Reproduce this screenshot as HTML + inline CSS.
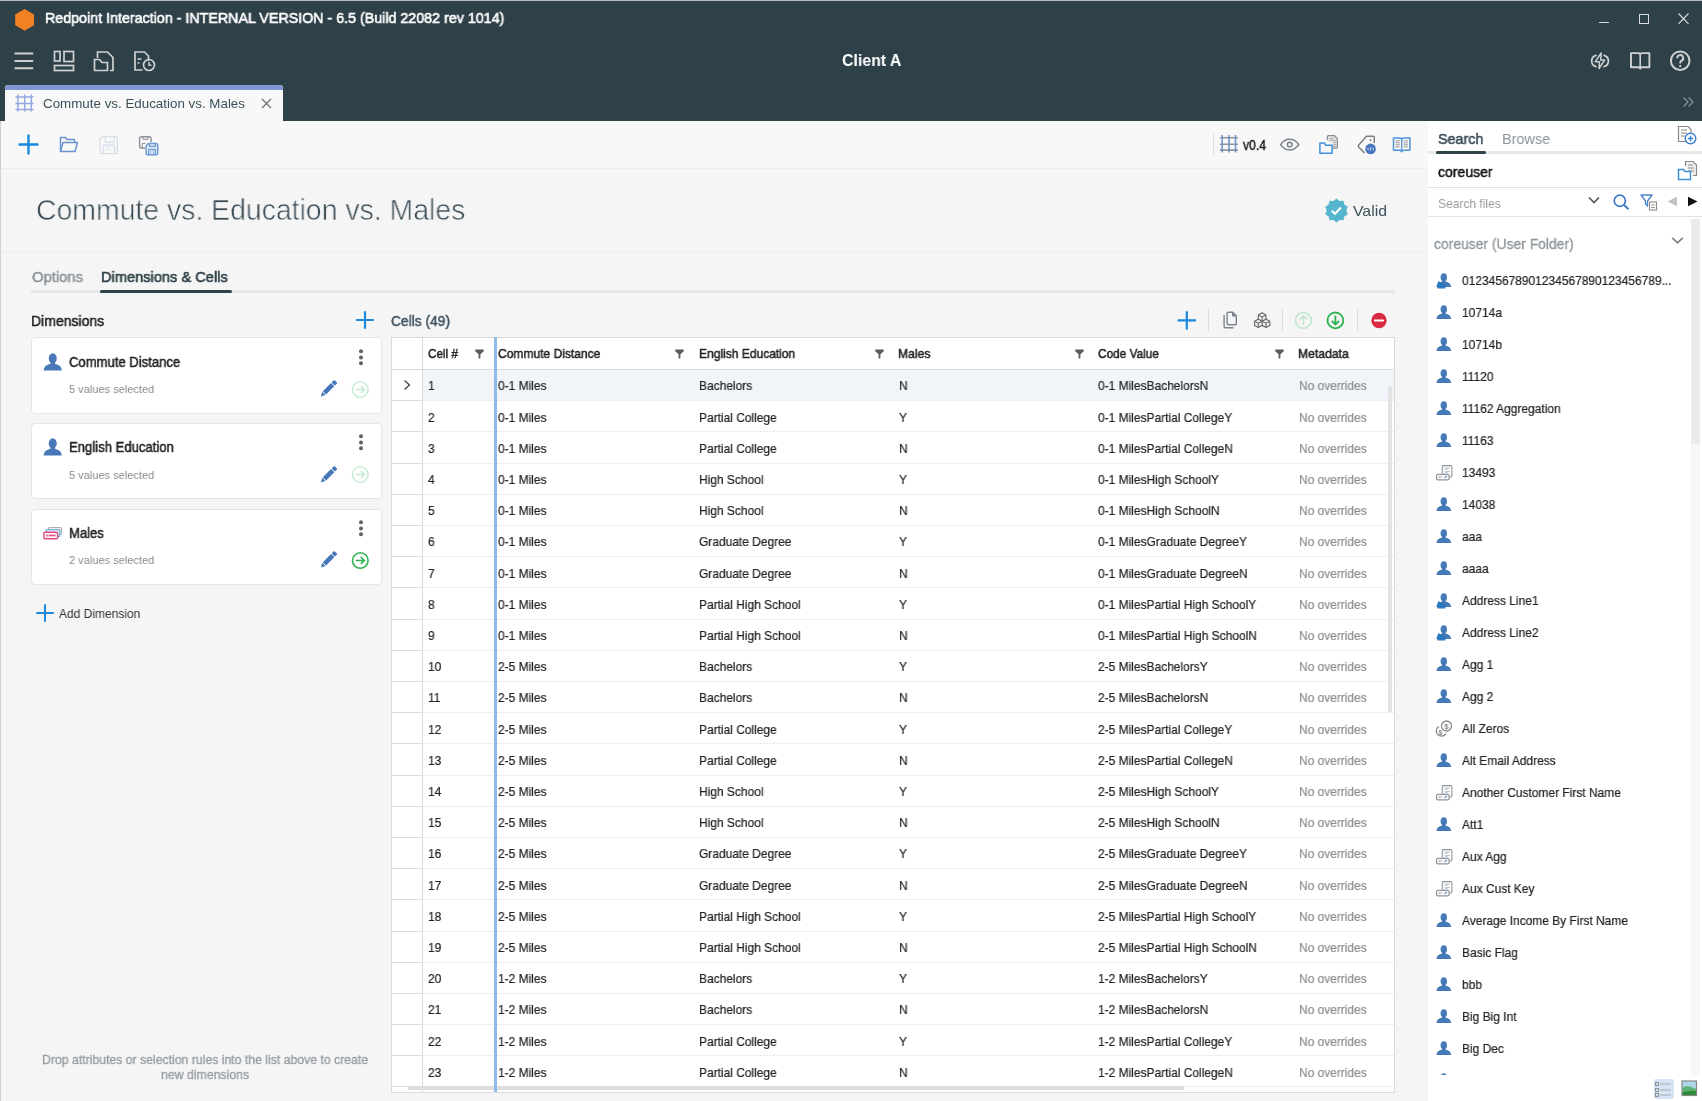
<!DOCTYPE html>
<html><head><meta charset="utf-8"><title>Redpoint Interaction</title>
<style>
html,body{margin:0;padding:0;width:1702px;height:1101px;overflow:hidden;background:#f4f4f4;font-family:"Liberation Sans", sans-serif}
.t{position:absolute;white-space:nowrap;will-change:transform}
.b{position:absolute}
.s{position:absolute;overflow:visible}
</style></head><body>
<div class="b" style="left:0px;top:0px;width:1702px;height:121px;background:#2e4048"></div>
<div class="b" style="left:0px;top:0px;width:1702px;height:1px;background:#b9bdbf"></div>
<svg class="s" style="left:13px;top:8px" width="22" height="24" viewBox="0 0 22 24"><polygon points="11.6,1 21,6.5 21,17.3 11.6,22.8 2.2,17.3 2.2,6.5" fill="#f28123"/></svg>
<div id="x1" class="t apptitle" style="left:44.6px;top:10.30px;font-size:15px;line-height:15px;color:#fff;font-weight:400;transform:scaleX(0.9509);transform-origin:0 0;-webkit-text-stroke:0.6px #fff;">Redpoint Interaction - INTERNAL VERSION - 6.5 (Build 22082 rev 1014)</div>
<div class="b" style="left:1599px;top:22px;width:10px;height:1px;background:#d9dcdd"></div>
<div class="b" style="left:1639px;top:13.5px;width:10px;height:10px;border:1px solid #d9dcdd;box-sizing:border-box"></div>
<svg class="s" style="left:1677px;top:13px" width="13" height="12" viewBox="0 0 13 12"><path d="M1.5 0.5L11.5 10.8M11.5 0.5L1.5 10.8" stroke="#d9dcdd" stroke-width="1.1"/></svg>
<svg class="s" style="left:14px;top:52px" width="20" height="18" viewBox="0 0 20 18"><path d="M0.5 1.5H19.2M0.5 9H19.2M0.5 16.3H19.2" stroke="#cfd2d3" stroke-width="2"/></svg>
<svg class="s" style="left:53px;top:50px" width="22" height="22" viewBox="0 0 22 22"><rect x="1.5" y="1.5" width="5.5" height="9.5" fill="none" stroke="#cfd2d3" stroke-width="1.7"/><rect x="11" y="1.5" width="9.5" height="10" fill="none" stroke="#cfd2d3" stroke-width="1.7"/><rect x="1.5" y="15.5" width="19" height="5" fill="none" stroke="#cfd2d3" stroke-width="1.7"/></svg>
<svg class="s" style="left:93px;top:50px" width="22" height="22" viewBox="0 0 22 22"><path d="M4.5 8V2H14.5L20 7.5V20.5H17" fill="none" stroke="#cfd2d3" stroke-width="1.7"/><path d="M1.5 9.5H6.5L9 12.5H14.5V20.5H1.5Z" fill="none" stroke="#cfd2d3" stroke-width="1.7"/></svg>
<svg class="s" style="left:133px;top:50px" width="24" height="22" viewBox="0 0 24 22"><path d="M9.5 20H2V2H11.5L15.5 6V11" fill="none" stroke="#cfd2d3" stroke-width="1.7"/><path d="M4.5 9H8.5M4.5 13H6.5" stroke="#cfd2d3" stroke-width="1.5"/><circle cx="16" cy="15" r="5.5" fill="none" stroke="#cfd2d3" stroke-width="1.7"/><path d="M16 12V15.3H18.5" fill="none" stroke="#cfd2d3" stroke-width="1.4"/></svg>
<div id="x2" class="t client" style="left:842px;top:52.01px;font-size:17px;line-height:17px;color:#fff;font-weight:700;transform:scaleX(0.9341);transform-origin:0 0;">Client A</div>
<svg class="s" style="left:1588px;top:50px" width="24" height="22" viewBox="1588 50 24 22"><g fill="none" stroke="#cfd2d3"><path d="M1596 55.4A5.8 5.8 0 0 0 1596 66.6M1604.1 55.4A5.8 5.8 0 0 1 1604.1 66.6" stroke-width="1.8" stroke-linecap="round"/><path d="M1601.2 53L1595.3 61.7H1599.5L1599 68.5L1604.7 59.9H1600.7Z" stroke-width="1.5" stroke-linejoin="round"/></g></svg>
<svg class="s" style="left:1628px;top:50px" width="24" height="22" viewBox="1628 50 24 22"><path d="M1631 53.1H1639L1640.2 54.2L1641.4 53.1H1649.4V67.2H1641.4L1640.2 68.5L1639 67.2H1631Z" fill="none" stroke="#cfd2d3" stroke-width="1.9" stroke-linejoin="round"/><path d="M1640.2 54.2V67.2" stroke="#cfd2d3" stroke-width="1.6"/></svg>
<svg class="s" style="left:1668px;top:49px" width="24" height="24" viewBox="1668 49 24 24"><circle cx="1680.2" cy="60.7" r="9.3" fill="none" stroke="#cfd2d3" stroke-width="2"/><path d="M1677.2 58.2A3 3 0 1 1 1681.2 60.9C1680.3 61.5 1680.2 62.3 1680.2 63.4" fill="none" stroke="#cfd2d3" stroke-width="1.9"/><circle cx="1680.2" cy="66.1" r="1.2" fill="#cfd2d3"/></svg>
<div class="b" style="left:5px;top:85px;width:278px;height:36px;background:#f8f8f8;border-radius:3px 3px 0 0;overflow:hidden"></div>
<div class="b" style="left:5px;top:85px;width:278px;height:5px;background:#7d97d5;border-radius:3px 3px 0 0"></div>
<svg class="s" style="left:14px;top:93px" width="21" height="20" viewBox="14 93 21 20"><path d="M17.9 94.5V111.5M24.7 94.5V111.5M31.3 94.5V111.5M15.5 97H33.5M15.5 103.4H33.5M15.5 109.5H33.5" stroke="#93a7e0" stroke-width="1.45"/></svg>
<div id="x3" class="t tabtitle" style="left:43px;top:96.80px;font-size:13px;line-height:13px;color:#3d5059;font-weight:400;transform:scaleX(1.0278);transform-origin:0 0;">Commute vs. Education vs. Males</div>
<svg class="s" style="left:261px;top:98px" width="11" height="11" viewBox="0 0 11 11"><path d="M1 1L10 10M10 1L1 10" stroke="#6e6e6e" stroke-width="1.2"/></svg>
<svg class="s" style="left:1682px;top:96px" width="13" height="12" viewBox="0 0 13 12"><path d="M1.5 1.5L6 6L1.5 10.5M6.5 1.5L11 6L6.5 10.5" fill="none" stroke="#8a9599" stroke-width="1.2"/></svg>
<div class="b" style="left:0px;top:121px;width:1428px;height:980px;background:#f5f5f5"></div>
<div class="b" style="left:0px;top:121px;width:1px;height:980px;background:#cfcfcf"></div>
<div class="b" style="left:1px;top:121px;width:1427px;height:47px;background:#f8f8f8"></div>
<div class="b" style="left:1px;top:168px;width:1423px;height:1px;background:#ededed"></div>
<svg class="s" style="left:18px;top:134px" width="21" height="21" viewBox="0 0 21 21"><path d="M10.5 1.5V19.5M1.5 10.5H19.5" stroke="#1a88dc" stroke-width="2.4" stroke-linecap="round"/></svg>
<svg class="s" style="left:59px;top:135px" width="21" height="19" viewBox="0 0 21 19"><path d="M1.5 16.5V2.5H6.5L8 4.5H15.5V7" fill="none" stroke="#6a94cf" stroke-width="1.5" stroke-linejoin="round"/><path d="M1.5 16.5L4 7.5H18.5L16 16.5Z" fill="none" stroke="#6a94cf" stroke-width="1.5" stroke-linejoin="round"/></svg>
<svg class="s" style="left:98px;top:135px" width="21" height="21" viewBox="98 135 21 21"><g fill="none" stroke-linejoin="round"><path d="M102.7 136.6H116.3Q117.3 136.6 117.3 137.6V152.7Q117.3 153.7 116.3 153.7H101Q100 153.7 100 152.7V139.3Z" stroke="#dadde1" stroke-width="1.3"/><path d="M105.3 136.6V141.3Q105.3 142.3 106.3 142.3H113.2Q114.2 142.3 114.2 141.3V136.6M103.2 153.7V146.2Q103.2 145.2 104.2 145.2H113.5Q114.5 145.2 114.5 146.2V153.7" stroke="#d3dceb" stroke-width="1.2"/><path d="M105.5 147.5H109M105.5 149.8H111.5" stroke="#dfe5ee" stroke-width="0.9"/></g></svg>
<svg class="s" style="left:137px;top:134px" width="23" height="23" viewBox="137 134 23 23"><g fill="none" stroke-linejoin="round"><path d="M151.1 142V138.5Q151.1 136.7 149.3 136.7H141.4Q139.6 136.7 139.6 138.5V146.2Q139.6 148 141.4 148H145" stroke="#8b9197" stroke-width="1.4"/><path d="M143 136.7V139.3H148V136.7M142.2 148V143.5H145.5" stroke="#8b9197" stroke-width="1"/><path d="M148.5 143.5H156.2Q157.7 143.5 157.7 145V153.2Q157.7 154.7 156.2 154.7H147.6Q146.1 154.7 146.1 153.2V146Z" fill="#e3ebf7" stroke="#6f9ad6" stroke-width="1.5"/><path d="M149.5 143.6V146.4H155.3V143.6M148.6 154.6V149.3H155.4V154.6" stroke="#6f9ad6" stroke-width="1.2"/><path d="M150.8 149.5V154.5M153.2 149.5V154.5" stroke="#8fb2e0" stroke-width="0.9"/></g></svg>
<div class="b" style="left:1213px;top:134px;width:1px;height:21px;background:#dedede"></div>
<svg class="s" style="left:1218px;top:134px" width="22" height="20" viewBox="1218 134 22 20"><path d="M1222.2 135.1V152.6M1229 135.1V152.6M1235.5 135.1V152.6" stroke="#6f9ad8" stroke-width="1.6"/><path d="M1219.8 137.8H1237.9M1219.8 144.2H1237.9M1219.8 150.1H1237.9" stroke="#7d868c" stroke-width="1.6" opacity="0.85"/></svg>
<div id="x4" class="t ver" style="left:1243px;top:138.15px;font-size:14px;line-height:14px;color:#222;font-weight:400;transform:scaleX(0.8689);transform-origin:0 0;-webkit-text-stroke:0.5px #222;">v0.4</div>
<svg class="s" style="left:1278px;top:137px" width="23" height="15" viewBox="1278 137 23 15"><g fill="none" stroke="#79828a" stroke-width="1.5"><path d="M1280.6 144.6C1283.5 140.3 1286.5 139.3 1289.7 139.3S1295.9 140.3 1298.8 144.6C1295.9 148.9 1292.9 149.9 1289.7 149.9S1283.5 148.9 1280.6 144.6Z"/><circle cx="1289.7" cy="144.6" r="2.3"/></g></svg>
<svg class="s" style="left:1318px;top:134px" width="21" height="21" viewBox="1318 134 21 21"><path d="M1327.4 140V136.7Q1327.4 135.7 1328.4 135.7H1334.5L1337.3 138.5V147.2Q1337.3 148.2 1336.3 148.2H1333" fill="#f0f0f0" stroke="#8a8a8a" stroke-width="1.3"/><path d="M1328.8 138.3H1334M1328.8 140.3H1336M1333 142.3H1336M1333 144.3H1336M1333 146.3H1336" stroke="#9a9a9a" stroke-width="0.9"/><path d="M1319.9 153.3V143H1324.3L1325.8 145.3H1332.1V153.3Z" fill="#f8f8f8" stroke="#3f8ed6" stroke-width="1.5" stroke-linejoin="round"/></svg>
<svg class="s" style="left:1356px;top:134px" width="21" height="21" viewBox="1356 134 21 21"><path d="M1374.3 143V137.3Q1374.3 136.2 1373.2 136.2H1366.5L1358.5 145.2Q1357.8 146 1358.5 146.8L1364.5 153" fill="none" stroke="#7a7a7a" stroke-width="1.4"/><circle cx="1370.5" cy="140.3" r="1" fill="#7a7a7a"/><circle cx="1370.6" cy="148.9" r="5.3" fill="#4676c0"/><path d="M1368.6 147.7L1367.5 148.9L1368.6 150.1M1372.6 147.7L1373.7 148.9L1372.6 150.1M1371 147.4L1370.2 150.4" fill="none" stroke="#fff" stroke-width="0.8"/></svg>
<svg class="s" style="left:1391px;top:136px" width="21" height="18" viewBox="1391 136 21 18"><path d="M1393.5 137.9H1400.3L1401.7 139.2L1403.1 137.9H1409.9V150.3H1403.1L1401.7 151.7L1400.3 150.3H1393.5Z" fill="none" stroke="#4a93d8" stroke-width="1.5" stroke-linejoin="round"/><path d="M1401.7 139.2V150.3" stroke="#4a93d8" stroke-width="1.3"/><path d="M1395.5 140.8H1399.8M1395.5 142.8H1399.8M1395.5 144.8H1399.8M1395.5 146.8H1399.8M1403.6 140.8H1407.9M1403.6 142.8H1407.9M1403.6 144.8H1407.9M1403.6 146.8H1407.9" stroke="#9a9a9a" stroke-width="1"/></svg>
<div id="x5" class="t title" style="left:36px;top:195.65px;font-size:29px;line-height:29px;color:#3b4c56;font-weight:400;transform:scaleX(0.9793);transform-origin:0 0;-webkit-text-stroke:0.6px #f5f5f5;">Commute vs. Education vs. Males</div>
<svg class="s" style="left:1324px;top:198px" width="25" height="25" viewBox="0 0 25 25"><path d="M12.5 0.5L15.5 3L19.5 2.8L20.3 6.6L23.8 8.7L22.3 12.5L23.8 16.3L20.3 18.4L19.5 22.2L15.5 22L12.5 24.5L9.5 22L5.5 22.2L4.7 18.4L1.2 16.3L2.7 12.5L1.2 8.7L4.7 6.6L5.5 2.8L9.5 3Z" fill="#55b5cd"/><path d="M7.7 12.8L11 15.8L17 9.5" fill="none" stroke="#fff" stroke-width="2.1"/></svg>
<div id="x6" class="t valid" style="left:1353.3px;top:202.60px;font-size:15px;line-height:15px;color:#3d4f5a;font-weight:400;transform:scaleX(1.0543);transform-origin:0 0;">Valid</div>
<div class="b" style="left:1px;top:251px;width:1423px;height:1px;background:#ececec"></div>
<div id="x7" class="t opt" style="left:32px;top:269.10px;font-size:15px;line-height:15px;color:#8b959b;font-weight:400;transform:scaleX(0.9864);transform-origin:0 0;-webkit-text-stroke:0.5px #8b959b;">Options</div>
<div id="x8" class="t dimc" style="left:101.3px;top:269.10px;font-size:15px;line-height:15px;color:#2f4149;font-weight:400;transform:scaleX(0.9743);transform-origin:0 0;-webkit-text-stroke:0.6px #2f4149;">Dimensions &amp; Cells</div>
<div class="b" style="left:31px;top:290px;width:1364px;height:3px;background:#e6e6e6"></div>
<div class="b" style="left:100px;top:290px;width:132px;height:3px;background:#2f4149;border-radius:2px"></div>
<div id="x9" class="t dimh" style="left:30.8px;top:313.40px;font-size:15px;line-height:15px;color:#222;font-weight:400;transform:scaleX(0.9340);transform-origin:0 0;-webkit-text-stroke:0.5px #222;">Dimensions</div>
<svg class="s" style="left:356px;top:311px" width="18" height="18" viewBox="0 0 18 18"><path d="M9 1V17M1 9H17" stroke="#1a88dc" stroke-width="2.2" stroke-linecap="round"/></svg>
<div class="b" style="left:31px;top:337px;width:351px;height:77px;background:#fff;border:1px solid #e4e6e8;border-radius:4px;box-sizing:border-box"></div>
<svg class="s" style="left:42.8px;top:352.5px" width="20" height="18.75" viewBox="0 0 16 15"><g fill="#4878b8"><ellipse cx="7.8" cy="4.3" rx="3.2" ry="4.1"/><path d="M6.1 7.6L5.8 8.8C3.2 9.4 0.9 10.3 0.5 14H15.1C14.7 10.3 12.4 9.4 9.8 8.8L9.5 7.6Z"/></g></svg>
<div id="x10" class="t cardt" style="left:68.7px;top:354.65px;font-size:14px;line-height:14px;color:#222;font-weight:400;transform:scaleX(0.9341);transform-origin:0 0;-webkit-text-stroke:0.5px #222;">Commute Distance</div>
<div id="x11" class="t cards" style="left:68.7px;top:384.21px;font-size:11.8px;line-height:11.8px;color:#8a8a8a;font-weight:400;transform:scaleX(0.9358);transform-origin:0 0;">5 values selected</div>
<svg class="s" style="left:357px;top:348.5px" width="8" height="18" viewBox="0 0 8 18"><circle cx="4" cy="2.2" r="2" fill="#606060"/><circle cx="4" cy="8.5" r="2" fill="#606060"/><circle cx="4" cy="14.3" r="2" fill="#606060"/></svg>
<svg class="s" style="left:318px;top:378px" width="22" height="22" viewBox="0 0 22 22"><g transform="translate(2.9 18.4) rotate(-45)" fill="#4677b8"><path d="M0 0L4.2 -2.3V2.3Z"/><rect x="5" y="-2.3" width="11.6" height="4.6"/><rect x="17.4" y="-2.3" width="3.8" height="4.6" rx="1"/></g></svg>
<svg class="s" style="left:351px;top:379.5px" width="19" height="19" viewBox="0 0 19 19"><circle cx="9.3" cy="9.5" r="7.8" fill="none" stroke="#c9ecd4" stroke-width="1.6"/><path d="M4.8 9.5H13.3M9.8 6L13.3 9.5L9.8 13" fill="none" stroke="#c9ecd4" stroke-width="1.7"/></svg>
<div class="b" style="left:31px;top:423px;width:351px;height:76px;background:#fff;border:1px solid #e4e6e8;border-radius:4px;box-sizing:border-box"></div>
<svg class="s" style="left:42.8px;top:438.2px" width="20" height="18.75" viewBox="0 0 16 15"><g fill="#4878b8"><ellipse cx="7.8" cy="4.3" rx="3.2" ry="4.1"/><path d="M6.1 7.6L5.8 8.8C3.2 9.4 0.9 10.3 0.5 14H15.1C14.7 10.3 12.4 9.4 9.8 8.8L9.5 7.6Z"/></g></svg>
<div id="x12" class="t cardt" style="left:68.7px;top:440.15px;font-size:14px;line-height:14px;color:#222;font-weight:400;transform:scaleX(0.9351);transform-origin:0 0;-webkit-text-stroke:0.5px #222;">English Education</div>
<div id="x13" class="t cards" style="left:68.7px;top:469.71px;font-size:11.8px;line-height:11.8px;color:#8a8a8a;font-weight:400;transform:scaleX(0.9358);transform-origin:0 0;">5 values selected</div>
<svg class="s" style="left:357px;top:434.0px" width="8" height="18" viewBox="0 0 8 18"><circle cx="4" cy="2.2" r="2" fill="#606060"/><circle cx="4" cy="8.5" r="2" fill="#606060"/><circle cx="4" cy="14.3" r="2" fill="#606060"/></svg>
<svg class="s" style="left:318px;top:463.5px" width="22" height="22" viewBox="0 0 22 22"><g transform="translate(2.9 18.4) rotate(-45)" fill="#4677b8"><path d="M0 0L4.2 -2.3V2.3Z"/><rect x="5" y="-2.3" width="11.6" height="4.6"/><rect x="17.4" y="-2.3" width="3.8" height="4.6" rx="1"/></g></svg>
<svg class="s" style="left:351px;top:465.0px" width="19" height="19" viewBox="0 0 19 19"><circle cx="9.3" cy="9.5" r="7.8" fill="none" stroke="#c9ecd4" stroke-width="1.6"/><path d="M4.8 9.5H13.3M9.8 6L13.3 9.5L9.8 13" fill="none" stroke="#c9ecd4" stroke-width="1.7"/></svg>
<div class="b" style="left:31px;top:509px;width:351px;height:76px;background:#fff;border:1px solid #e4e6e8;border-radius:4px;box-sizing:border-box"></div>
<svg class="s" style="left:42px;top:525px" width="22" height="16" viewBox="42 525 22 16"><rect x="48.3" y="527.5" width="13.2" height="7" rx="1.2" fill="#f0f0f0" stroke="#b0b0b0" stroke-width="1.1"/><rect x="45.9" y="529.8" width="13.9" height="6.8" rx="1.3" fill="#e8f1fb" stroke="#5b9bd5" stroke-width="1.1"/><rect x="43.8" y="532.3" width="13.8" height="6.5" rx="1.4" fill="#fff" stroke="#e24a80" stroke-width="1.4"/><rect x="45.3" y="533.8" width="10.8" height="3.5" fill="#f6d0de"/><circle cx="46.9" cy="535.5" r="0.8" fill="#e24a80"/><path d="M49 535.5H55.3" stroke="#e24a80" stroke-width="1.1"/></svg>
<div id="x14" class="t cardt" style="left:68.7px;top:525.65px;font-size:14px;line-height:14px;color:#222;font-weight:400;transform:scaleX(0.9315);transform-origin:0 0;-webkit-text-stroke:0.5px #222;">Males</div>
<div id="x15" class="t cards" style="left:68.7px;top:555.21px;font-size:11.8px;line-height:11.8px;color:#8a8a8a;font-weight:400;transform:scaleX(0.9358);transform-origin:0 0;">2 values selected</div>
<svg class="s" style="left:357px;top:519.5px" width="8" height="18" viewBox="0 0 8 18"><circle cx="4" cy="2.2" r="2" fill="#606060"/><circle cx="4" cy="8.5" r="2" fill="#606060"/><circle cx="4" cy="14.3" r="2" fill="#606060"/></svg>
<svg class="s" style="left:318px;top:549.0px" width="22" height="22" viewBox="0 0 22 22"><g transform="translate(2.9 18.4) rotate(-45)" fill="#4677b8"><path d="M0 0L4.2 -2.3V2.3Z"/><rect x="5" y="-2.3" width="11.6" height="4.6"/><rect x="17.4" y="-2.3" width="3.8" height="4.6" rx="1"/></g></svg>
<svg class="s" style="left:351px;top:550.5px" width="19" height="19" viewBox="0 0 19 19"><circle cx="9.3" cy="9.5" r="7.8" fill="none" stroke="#2fb350" stroke-width="1.6"/><path d="M4.8 9.5H13.3M9.8 6L13.3 9.5L9.8 13" fill="none" stroke="#2fb350" stroke-width="1.7"/></svg>
<svg class="s" style="left:36px;top:604px" width="18" height="18" viewBox="0 0 18 18"><path d="M9 1V17M1 9H17" stroke="#1a88dc" stroke-width="2" stroke-linecap="round"/></svg>
<div id="x16" class="t adddim" style="left:59.2px;top:606.57px;font-size:13.5px;line-height:13.5px;color:#333;font-weight:400;transform:scaleX(0.8881);transform-origin:0 0;">Add Dimension</div>
<div id="x17" class="t drop" style="left:42.2px;top:1053.30px;font-size:13px;line-height:13px;color:#949ba1;font-weight:400;transform:scaleX(0.9421);transform-origin:0 0;-webkit-text-stroke:0.3px #949ba1;">Drop attributes or selection rules into the list above to create</div>
<div id="x18" class="t drop" style="left:161.2px;top:1068.00px;font-size:13px;line-height:13px;color:#949ba1;font-weight:400;transform:scaleX(0.9451);transform-origin:0 0;-webkit-text-stroke:0.3px #949ba1;">new dimensions</div>
<div id="x19" class="t cellsh" style="left:390.8px;top:313.00px;font-size:15px;line-height:15px;color:#3d5260;font-weight:400;transform:scaleX(0.9192);transform-origin:0 0;-webkit-text-stroke:0.5px #3d5260;">Cells (49)</div>
<svg class="s" style="left:1176px;top:310px" width="22" height="22" viewBox="1176 310 22 22"><path d="M1186.8 312.1V328.7M1178.5 320.4H1195.1" stroke="#1a88dc" stroke-width="2.2" stroke-linecap="round"/></svg>
<div class="b" style="left:1208px;top:309px;width:1px;height:22px;background:#dcdcdc"></div>
<svg class="s" style="left:1221px;top:310px" width="18" height="20" viewBox="1221 310 18 20"><g fill="none" stroke="#7b848c" stroke-width="1.4" stroke-linejoin="round"><path d="M1224.1 315.1V326.5Q1224.1 327.7 1225.3 327.7H1233.5"/><path d="M1228.3 312.3H1232.8L1236.3 315.8V323.6Q1236.3 324.8 1235.1 324.8H1228.3Q1227.1 324.8 1227.1 323.6V313.5Q1227.1 312.3 1228.3 312.3Z"/></g><path d="M1232.5 312.5V316H1236" fill="#7b848c" stroke="#7b848c" stroke-width="1"/></svg>
<svg class="s" style="left:1252px;top:310px" width="20" height="20" viewBox="1252 310 20 20"><path d="M1258.3 319.09999999999997L1262.1 321.2V325.4L1258.3 327.5L1254.5 325.4V321.2Z M1254.5 321.2L1258.3 323.2L1262.1 321.2M1258.3 323.2V327.5M1266 319.09999999999997L1269.8 321.2V325.4L1266 327.5L1262.2 325.4V321.2Z M1262.2 321.2L1266 323.2L1269.8 321.2M1266 323.2V327.5M1262.1 312.9L1265.8999999999999 315V319.2L1262.1 321.3L1258.3 319.2V315Z M1258.3 315L1262.1 317L1265.8999999999999 315M1262.1 317V321.3" fill="none" stroke="#707070" stroke-width="1.2" stroke-linejoin="round"/></svg>
<div class="b" style="left:1282px;top:309px;width:1px;height:22px;background:#dcdcdc"></div>
<svg class="s" style="left:1294px;top:311px" width="19" height="19" viewBox="0 0 19 19"><circle cx="9.4" cy="9.4" r="7.9" fill="none" stroke="#bfe8cb" stroke-width="1.6"/><path d="M9.4 14V5M5.8 8.4L9.4 4.8L13 8.4" fill="none" stroke="#bfe8cb" stroke-width="1.6"/></svg>
<svg class="s" style="left:1326px;top:311px" width="19" height="19" viewBox="0 0 19 19"><circle cx="9.4" cy="9.4" r="7.9" fill="none" stroke="#2eb24f" stroke-width="1.8"/><path d="M9.4 4.5V13.5M5.8 10L9.4 13.6L13 10" fill="none" stroke="#2eb24f" stroke-width="1.8"/></svg>
<div class="b" style="left:1357px;top:309px;width:1px;height:22px;background:#dcdcdc"></div>
<svg class="s" style="left:1370px;top:312px" width="18" height="17" viewBox="0 0 18 17"><circle cx="9" cy="8.5" r="7.7" fill="#db2a44"/><path d="M5 8.5H13" stroke="#fff" stroke-width="2.2" stroke-linecap="round"/></svg>
<div class="b" style="left:391px;top:337px;width:1004px;height:756px;background:#fff;border:1px solid #dadada;box-sizing:border-box"></div>
<div class="b" style="left:422px;top:338px;width:1px;height:754px;background:#dadada"></div>
<div class="b" style="left:392px;top:369px;width:1002px;height:1px;background:#dadada"></div>
<div class="b" style="left:423px;top:370px;width:971px;height:30.4px;background:#f1f5f9"></div>
<div class="b" style="left:392px;top:400.20px;width:30px;height:1px;background:#dcdcdc"></div>
<div class="b" style="left:423px;top:400.20px;width:971px;height:1px;background:#eeeeee"></div>
<div id="x20" class="t cell" style="left:427.6px;top:379.30px;font-size:13px;line-height:13px;color:#222;font-weight:400;transform:scaleX(0.9200);transform-origin:0 0;-webkit-text-stroke:0.2px #222;">1</div>
<div id="x21" class="t cell" style="left:498px;top:379.30px;font-size:13px;line-height:13px;color:#222;font-weight:400;transform:scaleX(0.9200);transform-origin:0 0;-webkit-text-stroke:0.2px #222;">0-1 Miles</div>
<div id="x22" class="t cell" style="left:699px;top:379.30px;font-size:13px;line-height:13px;color:#222;font-weight:400;transform:scaleX(0.9200);transform-origin:0 0;-webkit-text-stroke:0.2px #222;">Bachelors</div>
<div id="x23" class="t cell" style="left:898.8px;top:379.30px;font-size:13px;line-height:13px;color:#222;font-weight:400;transform:scaleX(0.9200);transform-origin:0 0;-webkit-text-stroke:0.2px #222;">N</div>
<div id="x24" class="t cell" style="left:1098px;top:379.30px;font-size:13px;line-height:13px;color:#222;font-weight:400;transform:scaleX(0.9200);transform-origin:0 0;-webkit-text-stroke:0.2px #222;">0-1 MilesBachelorsN</div>
<div id="x25" class="t cell" style="left:1298.5px;top:379.30px;font-size:13px;line-height:13px;color:#8c8c8c;font-weight:400;transform:scaleX(0.9170);transform-origin:0 0;-webkit-text-stroke:0.2px #8c8c8c;">No overrides</div>
<div class="b" style="left:392px;top:431.40px;width:30px;height:1px;background:#dcdcdc"></div>
<div class="b" style="left:423px;top:431.40px;width:971px;height:1px;background:#eeeeee"></div>
<div id="x26" class="t cell" style="left:427.6px;top:410.50px;font-size:13px;line-height:13px;color:#222;font-weight:400;transform:scaleX(0.9200);transform-origin:0 0;-webkit-text-stroke:0.2px #222;">2</div>
<div id="x27" class="t cell" style="left:498px;top:410.50px;font-size:13px;line-height:13px;color:#222;font-weight:400;transform:scaleX(0.9200);transform-origin:0 0;-webkit-text-stroke:0.2px #222;">0-1 Miles</div>
<div id="x28" class="t cell" style="left:699px;top:410.50px;font-size:13px;line-height:13px;color:#222;font-weight:400;transform:scaleX(0.9200);transform-origin:0 0;-webkit-text-stroke:0.2px #222;">Partial College</div>
<div id="x29" class="t cell" style="left:898.8px;top:410.50px;font-size:13px;line-height:13px;color:#222;font-weight:400;transform:scaleX(0.9200);transform-origin:0 0;-webkit-text-stroke:0.2px #222;">Y</div>
<div id="x30" class="t cell" style="left:1098px;top:410.50px;font-size:13px;line-height:13px;color:#222;font-weight:400;transform:scaleX(0.9200);transform-origin:0 0;-webkit-text-stroke:0.2px #222;">0-1 MilesPartial CollegeY</div>
<div id="x31" class="t cell" style="left:1298.5px;top:410.50px;font-size:13px;line-height:13px;color:#8c8c8c;font-weight:400;transform:scaleX(0.9170);transform-origin:0 0;-webkit-text-stroke:0.2px #8c8c8c;">No overrides</div>
<div class="b" style="left:392px;top:462.60px;width:30px;height:1px;background:#dcdcdc"></div>
<div class="b" style="left:423px;top:462.60px;width:971px;height:1px;background:#eeeeee"></div>
<div id="x32" class="t cell" style="left:427.6px;top:441.70px;font-size:13px;line-height:13px;color:#222;font-weight:400;transform:scaleX(0.9200);transform-origin:0 0;-webkit-text-stroke:0.2px #222;">3</div>
<div id="x33" class="t cell" style="left:498px;top:441.70px;font-size:13px;line-height:13px;color:#222;font-weight:400;transform:scaleX(0.9200);transform-origin:0 0;-webkit-text-stroke:0.2px #222;">0-1 Miles</div>
<div id="x34" class="t cell" style="left:699px;top:441.70px;font-size:13px;line-height:13px;color:#222;font-weight:400;transform:scaleX(0.9200);transform-origin:0 0;-webkit-text-stroke:0.2px #222;">Partial College</div>
<div id="x35" class="t cell" style="left:898.8px;top:441.70px;font-size:13px;line-height:13px;color:#222;font-weight:400;transform:scaleX(0.9200);transform-origin:0 0;-webkit-text-stroke:0.2px #222;">N</div>
<div id="x36" class="t cell" style="left:1098px;top:441.70px;font-size:13px;line-height:13px;color:#222;font-weight:400;transform:scaleX(0.9200);transform-origin:0 0;-webkit-text-stroke:0.2px #222;">0-1 MilesPartial CollegeN</div>
<div id="x37" class="t cell" style="left:1298.5px;top:441.70px;font-size:13px;line-height:13px;color:#8c8c8c;font-weight:400;transform:scaleX(0.9170);transform-origin:0 0;-webkit-text-stroke:0.2px #8c8c8c;">No overrides</div>
<div class="b" style="left:392px;top:493.80px;width:30px;height:1px;background:#dcdcdc"></div>
<div class="b" style="left:423px;top:493.80px;width:971px;height:1px;background:#eeeeee"></div>
<div id="x38" class="t cell" style="left:427.6px;top:472.90px;font-size:13px;line-height:13px;color:#222;font-weight:400;transform:scaleX(0.9200);transform-origin:0 0;-webkit-text-stroke:0.2px #222;">4</div>
<div id="x39" class="t cell" style="left:498px;top:472.90px;font-size:13px;line-height:13px;color:#222;font-weight:400;transform:scaleX(0.9200);transform-origin:0 0;-webkit-text-stroke:0.2px #222;">0-1 Miles</div>
<div id="x40" class="t cell" style="left:699px;top:472.90px;font-size:13px;line-height:13px;color:#222;font-weight:400;transform:scaleX(0.9200);transform-origin:0 0;-webkit-text-stroke:0.2px #222;">High School</div>
<div id="x41" class="t cell" style="left:898.8px;top:472.90px;font-size:13px;line-height:13px;color:#222;font-weight:400;transform:scaleX(0.9200);transform-origin:0 0;-webkit-text-stroke:0.2px #222;">Y</div>
<div id="x42" class="t cell" style="left:1098px;top:472.90px;font-size:13px;line-height:13px;color:#222;font-weight:400;transform:scaleX(0.9200);transform-origin:0 0;-webkit-text-stroke:0.2px #222;">0-1 MilesHigh SchoolY</div>
<div id="x43" class="t cell" style="left:1298.5px;top:472.90px;font-size:13px;line-height:13px;color:#8c8c8c;font-weight:400;transform:scaleX(0.9170);transform-origin:0 0;-webkit-text-stroke:0.2px #8c8c8c;">No overrides</div>
<div class="b" style="left:392px;top:525.00px;width:30px;height:1px;background:#dcdcdc"></div>
<div class="b" style="left:423px;top:525.00px;width:971px;height:1px;background:#eeeeee"></div>
<div id="x44" class="t cell" style="left:427.6px;top:504.10px;font-size:13px;line-height:13px;color:#222;font-weight:400;transform:scaleX(0.9200);transform-origin:0 0;-webkit-text-stroke:0.2px #222;">5</div>
<div id="x45" class="t cell" style="left:498px;top:504.10px;font-size:13px;line-height:13px;color:#222;font-weight:400;transform:scaleX(0.9200);transform-origin:0 0;-webkit-text-stroke:0.2px #222;">0-1 Miles</div>
<div id="x46" class="t cell" style="left:699px;top:504.10px;font-size:13px;line-height:13px;color:#222;font-weight:400;transform:scaleX(0.9200);transform-origin:0 0;-webkit-text-stroke:0.2px #222;">High School</div>
<div id="x47" class="t cell" style="left:898.8px;top:504.10px;font-size:13px;line-height:13px;color:#222;font-weight:400;transform:scaleX(0.9200);transform-origin:0 0;-webkit-text-stroke:0.2px #222;">N</div>
<div id="x48" class="t cell" style="left:1098px;top:504.10px;font-size:13px;line-height:13px;color:#222;font-weight:400;transform:scaleX(0.9200);transform-origin:0 0;-webkit-text-stroke:0.2px #222;">0-1 MilesHigh SchoolN</div>
<div id="x49" class="t cell" style="left:1298.5px;top:504.10px;font-size:13px;line-height:13px;color:#8c8c8c;font-weight:400;transform:scaleX(0.9170);transform-origin:0 0;-webkit-text-stroke:0.2px #8c8c8c;">No overrides</div>
<div class="b" style="left:392px;top:556.20px;width:30px;height:1px;background:#dcdcdc"></div>
<div class="b" style="left:423px;top:556.20px;width:971px;height:1px;background:#eeeeee"></div>
<div id="x50" class="t cell" style="left:427.6px;top:535.30px;font-size:13px;line-height:13px;color:#222;font-weight:400;transform:scaleX(0.9200);transform-origin:0 0;-webkit-text-stroke:0.2px #222;">6</div>
<div id="x51" class="t cell" style="left:498px;top:535.30px;font-size:13px;line-height:13px;color:#222;font-weight:400;transform:scaleX(0.9200);transform-origin:0 0;-webkit-text-stroke:0.2px #222;">0-1 Miles</div>
<div id="x52" class="t cell" style="left:699px;top:535.30px;font-size:13px;line-height:13px;color:#222;font-weight:400;transform:scaleX(0.9200);transform-origin:0 0;-webkit-text-stroke:0.2px #222;">Graduate Degree</div>
<div id="x53" class="t cell" style="left:898.8px;top:535.30px;font-size:13px;line-height:13px;color:#222;font-weight:400;transform:scaleX(0.9200);transform-origin:0 0;-webkit-text-stroke:0.2px #222;">Y</div>
<div id="x54" class="t cell" style="left:1098px;top:535.30px;font-size:13px;line-height:13px;color:#222;font-weight:400;transform:scaleX(0.9200);transform-origin:0 0;-webkit-text-stroke:0.2px #222;">0-1 MilesGraduate DegreeY</div>
<div id="x55" class="t cell" style="left:1298.5px;top:535.30px;font-size:13px;line-height:13px;color:#8c8c8c;font-weight:400;transform:scaleX(0.9170);transform-origin:0 0;-webkit-text-stroke:0.2px #8c8c8c;">No overrides</div>
<div class="b" style="left:392px;top:587.40px;width:30px;height:1px;background:#dcdcdc"></div>
<div class="b" style="left:423px;top:587.40px;width:971px;height:1px;background:#eeeeee"></div>
<div id="x56" class="t cell" style="left:427.6px;top:566.50px;font-size:13px;line-height:13px;color:#222;font-weight:400;transform:scaleX(0.9200);transform-origin:0 0;-webkit-text-stroke:0.2px #222;">7</div>
<div id="x57" class="t cell" style="left:498px;top:566.50px;font-size:13px;line-height:13px;color:#222;font-weight:400;transform:scaleX(0.9200);transform-origin:0 0;-webkit-text-stroke:0.2px #222;">0-1 Miles</div>
<div id="x58" class="t cell" style="left:699px;top:566.50px;font-size:13px;line-height:13px;color:#222;font-weight:400;transform:scaleX(0.9200);transform-origin:0 0;-webkit-text-stroke:0.2px #222;">Graduate Degree</div>
<div id="x59" class="t cell" style="left:898.8px;top:566.50px;font-size:13px;line-height:13px;color:#222;font-weight:400;transform:scaleX(0.9200);transform-origin:0 0;-webkit-text-stroke:0.2px #222;">N</div>
<div id="x60" class="t cell" style="left:1098px;top:566.50px;font-size:13px;line-height:13px;color:#222;font-weight:400;transform:scaleX(0.9200);transform-origin:0 0;-webkit-text-stroke:0.2px #222;">0-1 MilesGraduate DegreeN</div>
<div id="x61" class="t cell" style="left:1298.5px;top:566.50px;font-size:13px;line-height:13px;color:#8c8c8c;font-weight:400;transform:scaleX(0.9170);transform-origin:0 0;-webkit-text-stroke:0.2px #8c8c8c;">No overrides</div>
<div class="b" style="left:392px;top:618.60px;width:30px;height:1px;background:#dcdcdc"></div>
<div class="b" style="left:423px;top:618.60px;width:971px;height:1px;background:#eeeeee"></div>
<div id="x62" class="t cell" style="left:427.6px;top:597.70px;font-size:13px;line-height:13px;color:#222;font-weight:400;transform:scaleX(0.9200);transform-origin:0 0;-webkit-text-stroke:0.2px #222;">8</div>
<div id="x63" class="t cell" style="left:498px;top:597.70px;font-size:13px;line-height:13px;color:#222;font-weight:400;transform:scaleX(0.9200);transform-origin:0 0;-webkit-text-stroke:0.2px #222;">0-1 Miles</div>
<div id="x64" class="t cell" style="left:699px;top:597.70px;font-size:13px;line-height:13px;color:#222;font-weight:400;transform:scaleX(0.9200);transform-origin:0 0;-webkit-text-stroke:0.2px #222;">Partial High School</div>
<div id="x65" class="t cell" style="left:898.8px;top:597.70px;font-size:13px;line-height:13px;color:#222;font-weight:400;transform:scaleX(0.9200);transform-origin:0 0;-webkit-text-stroke:0.2px #222;">Y</div>
<div id="x66" class="t cell" style="left:1098px;top:597.70px;font-size:13px;line-height:13px;color:#222;font-weight:400;transform:scaleX(0.9200);transform-origin:0 0;-webkit-text-stroke:0.2px #222;">0-1 MilesPartial High SchoolY</div>
<div id="x67" class="t cell" style="left:1298.5px;top:597.70px;font-size:13px;line-height:13px;color:#8c8c8c;font-weight:400;transform:scaleX(0.9170);transform-origin:0 0;-webkit-text-stroke:0.2px #8c8c8c;">No overrides</div>
<div class="b" style="left:392px;top:649.80px;width:30px;height:1px;background:#dcdcdc"></div>
<div class="b" style="left:423px;top:649.80px;width:971px;height:1px;background:#eeeeee"></div>
<div id="x68" class="t cell" style="left:427.6px;top:628.90px;font-size:13px;line-height:13px;color:#222;font-weight:400;transform:scaleX(0.9200);transform-origin:0 0;-webkit-text-stroke:0.2px #222;">9</div>
<div id="x69" class="t cell" style="left:498px;top:628.90px;font-size:13px;line-height:13px;color:#222;font-weight:400;transform:scaleX(0.9200);transform-origin:0 0;-webkit-text-stroke:0.2px #222;">0-1 Miles</div>
<div id="x70" class="t cell" style="left:699px;top:628.90px;font-size:13px;line-height:13px;color:#222;font-weight:400;transform:scaleX(0.9200);transform-origin:0 0;-webkit-text-stroke:0.2px #222;">Partial High School</div>
<div id="x71" class="t cell" style="left:898.8px;top:628.90px;font-size:13px;line-height:13px;color:#222;font-weight:400;transform:scaleX(0.9200);transform-origin:0 0;-webkit-text-stroke:0.2px #222;">N</div>
<div id="x72" class="t cell" style="left:1098px;top:628.90px;font-size:13px;line-height:13px;color:#222;font-weight:400;transform:scaleX(0.9200);transform-origin:0 0;-webkit-text-stroke:0.2px #222;">0-1 MilesPartial High SchoolN</div>
<div id="x73" class="t cell" style="left:1298.5px;top:628.90px;font-size:13px;line-height:13px;color:#8c8c8c;font-weight:400;transform:scaleX(0.9170);transform-origin:0 0;-webkit-text-stroke:0.2px #8c8c8c;">No overrides</div>
<div class="b" style="left:392px;top:681.00px;width:30px;height:1px;background:#dcdcdc"></div>
<div class="b" style="left:423px;top:681.00px;width:971px;height:1px;background:#eeeeee"></div>
<div id="x74" class="t cell" style="left:427.6px;top:660.10px;font-size:13px;line-height:13px;color:#222;font-weight:400;transform:scaleX(0.9200);transform-origin:0 0;-webkit-text-stroke:0.2px #222;">10</div>
<div id="x75" class="t cell" style="left:498px;top:660.10px;font-size:13px;line-height:13px;color:#222;font-weight:400;transform:scaleX(0.9200);transform-origin:0 0;-webkit-text-stroke:0.2px #222;">2-5 Miles</div>
<div id="x76" class="t cell" style="left:699px;top:660.10px;font-size:13px;line-height:13px;color:#222;font-weight:400;transform:scaleX(0.9200);transform-origin:0 0;-webkit-text-stroke:0.2px #222;">Bachelors</div>
<div id="x77" class="t cell" style="left:898.8px;top:660.10px;font-size:13px;line-height:13px;color:#222;font-weight:400;transform:scaleX(0.9200);transform-origin:0 0;-webkit-text-stroke:0.2px #222;">Y</div>
<div id="x78" class="t cell" style="left:1098px;top:660.10px;font-size:13px;line-height:13px;color:#222;font-weight:400;transform:scaleX(0.9200);transform-origin:0 0;-webkit-text-stroke:0.2px #222;">2-5 MilesBachelorsY</div>
<div id="x79" class="t cell" style="left:1298.5px;top:660.10px;font-size:13px;line-height:13px;color:#8c8c8c;font-weight:400;transform:scaleX(0.9170);transform-origin:0 0;-webkit-text-stroke:0.2px #8c8c8c;">No overrides</div>
<div class="b" style="left:392px;top:712.20px;width:30px;height:1px;background:#dcdcdc"></div>
<div class="b" style="left:423px;top:712.20px;width:971px;height:1px;background:#eeeeee"></div>
<div id="x80" class="t cell" style="left:427.6px;top:691.30px;font-size:13px;line-height:13px;color:#222;font-weight:400;transform:scaleX(0.9200);transform-origin:0 0;-webkit-text-stroke:0.2px #222;">11</div>
<div id="x81" class="t cell" style="left:498px;top:691.30px;font-size:13px;line-height:13px;color:#222;font-weight:400;transform:scaleX(0.9200);transform-origin:0 0;-webkit-text-stroke:0.2px #222;">2-5 Miles</div>
<div id="x82" class="t cell" style="left:699px;top:691.30px;font-size:13px;line-height:13px;color:#222;font-weight:400;transform:scaleX(0.9200);transform-origin:0 0;-webkit-text-stroke:0.2px #222;">Bachelors</div>
<div id="x83" class="t cell" style="left:898.8px;top:691.30px;font-size:13px;line-height:13px;color:#222;font-weight:400;transform:scaleX(0.9200);transform-origin:0 0;-webkit-text-stroke:0.2px #222;">N</div>
<div id="x84" class="t cell" style="left:1098px;top:691.30px;font-size:13px;line-height:13px;color:#222;font-weight:400;transform:scaleX(0.9200);transform-origin:0 0;-webkit-text-stroke:0.2px #222;">2-5 MilesBachelorsN</div>
<div id="x85" class="t cell" style="left:1298.5px;top:691.30px;font-size:13px;line-height:13px;color:#8c8c8c;font-weight:400;transform:scaleX(0.9170);transform-origin:0 0;-webkit-text-stroke:0.2px #8c8c8c;">No overrides</div>
<div class="b" style="left:392px;top:743.40px;width:30px;height:1px;background:#dcdcdc"></div>
<div class="b" style="left:423px;top:743.40px;width:971px;height:1px;background:#eeeeee"></div>
<div id="x86" class="t cell" style="left:427.6px;top:722.50px;font-size:13px;line-height:13px;color:#222;font-weight:400;transform:scaleX(0.9200);transform-origin:0 0;-webkit-text-stroke:0.2px #222;">12</div>
<div id="x87" class="t cell" style="left:498px;top:722.50px;font-size:13px;line-height:13px;color:#222;font-weight:400;transform:scaleX(0.9200);transform-origin:0 0;-webkit-text-stroke:0.2px #222;">2-5 Miles</div>
<div id="x88" class="t cell" style="left:699px;top:722.50px;font-size:13px;line-height:13px;color:#222;font-weight:400;transform:scaleX(0.9200);transform-origin:0 0;-webkit-text-stroke:0.2px #222;">Partial College</div>
<div id="x89" class="t cell" style="left:898.8px;top:722.50px;font-size:13px;line-height:13px;color:#222;font-weight:400;transform:scaleX(0.9200);transform-origin:0 0;-webkit-text-stroke:0.2px #222;">Y</div>
<div id="x90" class="t cell" style="left:1098px;top:722.50px;font-size:13px;line-height:13px;color:#222;font-weight:400;transform:scaleX(0.9200);transform-origin:0 0;-webkit-text-stroke:0.2px #222;">2-5 MilesPartial CollegeY</div>
<div id="x91" class="t cell" style="left:1298.5px;top:722.50px;font-size:13px;line-height:13px;color:#8c8c8c;font-weight:400;transform:scaleX(0.9170);transform-origin:0 0;-webkit-text-stroke:0.2px #8c8c8c;">No overrides</div>
<div class="b" style="left:392px;top:774.60px;width:30px;height:1px;background:#dcdcdc"></div>
<div class="b" style="left:423px;top:774.60px;width:971px;height:1px;background:#eeeeee"></div>
<div id="x92" class="t cell" style="left:427.6px;top:753.70px;font-size:13px;line-height:13px;color:#222;font-weight:400;transform:scaleX(0.9200);transform-origin:0 0;-webkit-text-stroke:0.2px #222;">13</div>
<div id="x93" class="t cell" style="left:498px;top:753.70px;font-size:13px;line-height:13px;color:#222;font-weight:400;transform:scaleX(0.9200);transform-origin:0 0;-webkit-text-stroke:0.2px #222;">2-5 Miles</div>
<div id="x94" class="t cell" style="left:699px;top:753.70px;font-size:13px;line-height:13px;color:#222;font-weight:400;transform:scaleX(0.9200);transform-origin:0 0;-webkit-text-stroke:0.2px #222;">Partial College</div>
<div id="x95" class="t cell" style="left:898.8px;top:753.70px;font-size:13px;line-height:13px;color:#222;font-weight:400;transform:scaleX(0.9200);transform-origin:0 0;-webkit-text-stroke:0.2px #222;">N</div>
<div id="x96" class="t cell" style="left:1098px;top:753.70px;font-size:13px;line-height:13px;color:#222;font-weight:400;transform:scaleX(0.9200);transform-origin:0 0;-webkit-text-stroke:0.2px #222;">2-5 MilesPartial CollegeN</div>
<div id="x97" class="t cell" style="left:1298.5px;top:753.70px;font-size:13px;line-height:13px;color:#8c8c8c;font-weight:400;transform:scaleX(0.9170);transform-origin:0 0;-webkit-text-stroke:0.2px #8c8c8c;">No overrides</div>
<div class="b" style="left:392px;top:805.80px;width:30px;height:1px;background:#dcdcdc"></div>
<div class="b" style="left:423px;top:805.80px;width:971px;height:1px;background:#eeeeee"></div>
<div id="x98" class="t cell" style="left:427.6px;top:784.90px;font-size:13px;line-height:13px;color:#222;font-weight:400;transform:scaleX(0.9200);transform-origin:0 0;-webkit-text-stroke:0.2px #222;">14</div>
<div id="x99" class="t cell" style="left:498px;top:784.90px;font-size:13px;line-height:13px;color:#222;font-weight:400;transform:scaleX(0.9200);transform-origin:0 0;-webkit-text-stroke:0.2px #222;">2-5 Miles</div>
<div id="x100" class="t cell" style="left:699px;top:784.90px;font-size:13px;line-height:13px;color:#222;font-weight:400;transform:scaleX(0.9200);transform-origin:0 0;-webkit-text-stroke:0.2px #222;">High School</div>
<div id="x101" class="t cell" style="left:898.8px;top:784.90px;font-size:13px;line-height:13px;color:#222;font-weight:400;transform:scaleX(0.9200);transform-origin:0 0;-webkit-text-stroke:0.2px #222;">Y</div>
<div id="x102" class="t cell" style="left:1098px;top:784.90px;font-size:13px;line-height:13px;color:#222;font-weight:400;transform:scaleX(0.9200);transform-origin:0 0;-webkit-text-stroke:0.2px #222;">2-5 MilesHigh SchoolY</div>
<div id="x103" class="t cell" style="left:1298.5px;top:784.90px;font-size:13px;line-height:13px;color:#8c8c8c;font-weight:400;transform:scaleX(0.9170);transform-origin:0 0;-webkit-text-stroke:0.2px #8c8c8c;">No overrides</div>
<div class="b" style="left:392px;top:837.00px;width:30px;height:1px;background:#dcdcdc"></div>
<div class="b" style="left:423px;top:837.00px;width:971px;height:1px;background:#eeeeee"></div>
<div id="x104" class="t cell" style="left:427.6px;top:816.10px;font-size:13px;line-height:13px;color:#222;font-weight:400;transform:scaleX(0.9200);transform-origin:0 0;-webkit-text-stroke:0.2px #222;">15</div>
<div id="x105" class="t cell" style="left:498px;top:816.10px;font-size:13px;line-height:13px;color:#222;font-weight:400;transform:scaleX(0.9200);transform-origin:0 0;-webkit-text-stroke:0.2px #222;">2-5 Miles</div>
<div id="x106" class="t cell" style="left:699px;top:816.10px;font-size:13px;line-height:13px;color:#222;font-weight:400;transform:scaleX(0.9200);transform-origin:0 0;-webkit-text-stroke:0.2px #222;">High School</div>
<div id="x107" class="t cell" style="left:898.8px;top:816.10px;font-size:13px;line-height:13px;color:#222;font-weight:400;transform:scaleX(0.9200);transform-origin:0 0;-webkit-text-stroke:0.2px #222;">N</div>
<div id="x108" class="t cell" style="left:1098px;top:816.10px;font-size:13px;line-height:13px;color:#222;font-weight:400;transform:scaleX(0.9200);transform-origin:0 0;-webkit-text-stroke:0.2px #222;">2-5 MilesHigh SchoolN</div>
<div id="x109" class="t cell" style="left:1298.5px;top:816.10px;font-size:13px;line-height:13px;color:#8c8c8c;font-weight:400;transform:scaleX(0.9170);transform-origin:0 0;-webkit-text-stroke:0.2px #8c8c8c;">No overrides</div>
<div class="b" style="left:392px;top:868.20px;width:30px;height:1px;background:#dcdcdc"></div>
<div class="b" style="left:423px;top:868.20px;width:971px;height:1px;background:#eeeeee"></div>
<div id="x110" class="t cell" style="left:427.6px;top:847.30px;font-size:13px;line-height:13px;color:#222;font-weight:400;transform:scaleX(0.9200);transform-origin:0 0;-webkit-text-stroke:0.2px #222;">16</div>
<div id="x111" class="t cell" style="left:498px;top:847.30px;font-size:13px;line-height:13px;color:#222;font-weight:400;transform:scaleX(0.9200);transform-origin:0 0;-webkit-text-stroke:0.2px #222;">2-5 Miles</div>
<div id="x112" class="t cell" style="left:699px;top:847.30px;font-size:13px;line-height:13px;color:#222;font-weight:400;transform:scaleX(0.9200);transform-origin:0 0;-webkit-text-stroke:0.2px #222;">Graduate Degree</div>
<div id="x113" class="t cell" style="left:898.8px;top:847.30px;font-size:13px;line-height:13px;color:#222;font-weight:400;transform:scaleX(0.9200);transform-origin:0 0;-webkit-text-stroke:0.2px #222;">Y</div>
<div id="x114" class="t cell" style="left:1098px;top:847.30px;font-size:13px;line-height:13px;color:#222;font-weight:400;transform:scaleX(0.9200);transform-origin:0 0;-webkit-text-stroke:0.2px #222;">2-5 MilesGraduate DegreeY</div>
<div id="x115" class="t cell" style="left:1298.5px;top:847.30px;font-size:13px;line-height:13px;color:#8c8c8c;font-weight:400;transform:scaleX(0.9170);transform-origin:0 0;-webkit-text-stroke:0.2px #8c8c8c;">No overrides</div>
<div class="b" style="left:392px;top:899.40px;width:30px;height:1px;background:#dcdcdc"></div>
<div class="b" style="left:423px;top:899.40px;width:971px;height:1px;background:#eeeeee"></div>
<div id="x116" class="t cell" style="left:427.6px;top:878.50px;font-size:13px;line-height:13px;color:#222;font-weight:400;transform:scaleX(0.9200);transform-origin:0 0;-webkit-text-stroke:0.2px #222;">17</div>
<div id="x117" class="t cell" style="left:498px;top:878.50px;font-size:13px;line-height:13px;color:#222;font-weight:400;transform:scaleX(0.9200);transform-origin:0 0;-webkit-text-stroke:0.2px #222;">2-5 Miles</div>
<div id="x118" class="t cell" style="left:699px;top:878.50px;font-size:13px;line-height:13px;color:#222;font-weight:400;transform:scaleX(0.9200);transform-origin:0 0;-webkit-text-stroke:0.2px #222;">Graduate Degree</div>
<div id="x119" class="t cell" style="left:898.8px;top:878.50px;font-size:13px;line-height:13px;color:#222;font-weight:400;transform:scaleX(0.9200);transform-origin:0 0;-webkit-text-stroke:0.2px #222;">N</div>
<div id="x120" class="t cell" style="left:1098px;top:878.50px;font-size:13px;line-height:13px;color:#222;font-weight:400;transform:scaleX(0.9200);transform-origin:0 0;-webkit-text-stroke:0.2px #222;">2-5 MilesGraduate DegreeN</div>
<div id="x121" class="t cell" style="left:1298.5px;top:878.50px;font-size:13px;line-height:13px;color:#8c8c8c;font-weight:400;transform:scaleX(0.9170);transform-origin:0 0;-webkit-text-stroke:0.2px #8c8c8c;">No overrides</div>
<div class="b" style="left:392px;top:930.60px;width:30px;height:1px;background:#dcdcdc"></div>
<div class="b" style="left:423px;top:930.60px;width:971px;height:1px;background:#eeeeee"></div>
<div id="x122" class="t cell" style="left:427.6px;top:909.70px;font-size:13px;line-height:13px;color:#222;font-weight:400;transform:scaleX(0.9200);transform-origin:0 0;-webkit-text-stroke:0.2px #222;">18</div>
<div id="x123" class="t cell" style="left:498px;top:909.70px;font-size:13px;line-height:13px;color:#222;font-weight:400;transform:scaleX(0.9200);transform-origin:0 0;-webkit-text-stroke:0.2px #222;">2-5 Miles</div>
<div id="x124" class="t cell" style="left:699px;top:909.70px;font-size:13px;line-height:13px;color:#222;font-weight:400;transform:scaleX(0.9200);transform-origin:0 0;-webkit-text-stroke:0.2px #222;">Partial High School</div>
<div id="x125" class="t cell" style="left:898.8px;top:909.70px;font-size:13px;line-height:13px;color:#222;font-weight:400;transform:scaleX(0.9200);transform-origin:0 0;-webkit-text-stroke:0.2px #222;">Y</div>
<div id="x126" class="t cell" style="left:1098px;top:909.70px;font-size:13px;line-height:13px;color:#222;font-weight:400;transform:scaleX(0.9200);transform-origin:0 0;-webkit-text-stroke:0.2px #222;">2-5 MilesPartial High SchoolY</div>
<div id="x127" class="t cell" style="left:1298.5px;top:909.70px;font-size:13px;line-height:13px;color:#8c8c8c;font-weight:400;transform:scaleX(0.9170);transform-origin:0 0;-webkit-text-stroke:0.2px #8c8c8c;">No overrides</div>
<div class="b" style="left:392px;top:961.80px;width:30px;height:1px;background:#dcdcdc"></div>
<div class="b" style="left:423px;top:961.80px;width:971px;height:1px;background:#eeeeee"></div>
<div id="x128" class="t cell" style="left:427.6px;top:940.90px;font-size:13px;line-height:13px;color:#222;font-weight:400;transform:scaleX(0.9200);transform-origin:0 0;-webkit-text-stroke:0.2px #222;">19</div>
<div id="x129" class="t cell" style="left:498px;top:940.90px;font-size:13px;line-height:13px;color:#222;font-weight:400;transform:scaleX(0.9200);transform-origin:0 0;-webkit-text-stroke:0.2px #222;">2-5 Miles</div>
<div id="x130" class="t cell" style="left:699px;top:940.90px;font-size:13px;line-height:13px;color:#222;font-weight:400;transform:scaleX(0.9200);transform-origin:0 0;-webkit-text-stroke:0.2px #222;">Partial High School</div>
<div id="x131" class="t cell" style="left:898.8px;top:940.90px;font-size:13px;line-height:13px;color:#222;font-weight:400;transform:scaleX(0.9200);transform-origin:0 0;-webkit-text-stroke:0.2px #222;">N</div>
<div id="x132" class="t cell" style="left:1098px;top:940.90px;font-size:13px;line-height:13px;color:#222;font-weight:400;transform:scaleX(0.9200);transform-origin:0 0;-webkit-text-stroke:0.2px #222;">2-5 MilesPartial High SchoolN</div>
<div id="x133" class="t cell" style="left:1298.5px;top:940.90px;font-size:13px;line-height:13px;color:#8c8c8c;font-weight:400;transform:scaleX(0.9170);transform-origin:0 0;-webkit-text-stroke:0.2px #8c8c8c;">No overrides</div>
<div class="b" style="left:392px;top:993.00px;width:30px;height:1px;background:#dcdcdc"></div>
<div class="b" style="left:423px;top:993.00px;width:971px;height:1px;background:#eeeeee"></div>
<div id="x134" class="t cell" style="left:427.6px;top:972.10px;font-size:13px;line-height:13px;color:#222;font-weight:400;transform:scaleX(0.9200);transform-origin:0 0;-webkit-text-stroke:0.2px #222;">20</div>
<div id="x135" class="t cell" style="left:498px;top:972.10px;font-size:13px;line-height:13px;color:#222;font-weight:400;transform:scaleX(0.9200);transform-origin:0 0;-webkit-text-stroke:0.2px #222;">1-2 Miles</div>
<div id="x136" class="t cell" style="left:699px;top:972.10px;font-size:13px;line-height:13px;color:#222;font-weight:400;transform:scaleX(0.9200);transform-origin:0 0;-webkit-text-stroke:0.2px #222;">Bachelors</div>
<div id="x137" class="t cell" style="left:898.8px;top:972.10px;font-size:13px;line-height:13px;color:#222;font-weight:400;transform:scaleX(0.9200);transform-origin:0 0;-webkit-text-stroke:0.2px #222;">Y</div>
<div id="x138" class="t cell" style="left:1098px;top:972.10px;font-size:13px;line-height:13px;color:#222;font-weight:400;transform:scaleX(0.9200);transform-origin:0 0;-webkit-text-stroke:0.2px #222;">1-2 MilesBachelorsY</div>
<div id="x139" class="t cell" style="left:1298.5px;top:972.10px;font-size:13px;line-height:13px;color:#8c8c8c;font-weight:400;transform:scaleX(0.9170);transform-origin:0 0;-webkit-text-stroke:0.2px #8c8c8c;">No overrides</div>
<div class="b" style="left:392px;top:1024.20px;width:30px;height:1px;background:#dcdcdc"></div>
<div class="b" style="left:423px;top:1024.20px;width:971px;height:1px;background:#eeeeee"></div>
<div id="x140" class="t cell" style="left:427.6px;top:1003.30px;font-size:13px;line-height:13px;color:#222;font-weight:400;transform:scaleX(0.9200);transform-origin:0 0;-webkit-text-stroke:0.2px #222;">21</div>
<div id="x141" class="t cell" style="left:498px;top:1003.30px;font-size:13px;line-height:13px;color:#222;font-weight:400;transform:scaleX(0.9200);transform-origin:0 0;-webkit-text-stroke:0.2px #222;">1-2 Miles</div>
<div id="x142" class="t cell" style="left:699px;top:1003.30px;font-size:13px;line-height:13px;color:#222;font-weight:400;transform:scaleX(0.9200);transform-origin:0 0;-webkit-text-stroke:0.2px #222;">Bachelors</div>
<div id="x143" class="t cell" style="left:898.8px;top:1003.30px;font-size:13px;line-height:13px;color:#222;font-weight:400;transform:scaleX(0.9200);transform-origin:0 0;-webkit-text-stroke:0.2px #222;">N</div>
<div id="x144" class="t cell" style="left:1098px;top:1003.30px;font-size:13px;line-height:13px;color:#222;font-weight:400;transform:scaleX(0.9200);transform-origin:0 0;-webkit-text-stroke:0.2px #222;">1-2 MilesBachelorsN</div>
<div id="x145" class="t cell" style="left:1298.5px;top:1003.30px;font-size:13px;line-height:13px;color:#8c8c8c;font-weight:400;transform:scaleX(0.9170);transform-origin:0 0;-webkit-text-stroke:0.2px #8c8c8c;">No overrides</div>
<div class="b" style="left:392px;top:1055.40px;width:30px;height:1px;background:#dcdcdc"></div>
<div class="b" style="left:423px;top:1055.40px;width:971px;height:1px;background:#eeeeee"></div>
<div id="x146" class="t cell" style="left:427.6px;top:1034.50px;font-size:13px;line-height:13px;color:#222;font-weight:400;transform:scaleX(0.9200);transform-origin:0 0;-webkit-text-stroke:0.2px #222;">22</div>
<div id="x147" class="t cell" style="left:498px;top:1034.50px;font-size:13px;line-height:13px;color:#222;font-weight:400;transform:scaleX(0.9200);transform-origin:0 0;-webkit-text-stroke:0.2px #222;">1-2 Miles</div>
<div id="x148" class="t cell" style="left:699px;top:1034.50px;font-size:13px;line-height:13px;color:#222;font-weight:400;transform:scaleX(0.9200);transform-origin:0 0;-webkit-text-stroke:0.2px #222;">Partial College</div>
<div id="x149" class="t cell" style="left:898.8px;top:1034.50px;font-size:13px;line-height:13px;color:#222;font-weight:400;transform:scaleX(0.9200);transform-origin:0 0;-webkit-text-stroke:0.2px #222;">Y</div>
<div id="x150" class="t cell" style="left:1098px;top:1034.50px;font-size:13px;line-height:13px;color:#222;font-weight:400;transform:scaleX(0.9200);transform-origin:0 0;-webkit-text-stroke:0.2px #222;">1-2 MilesPartial CollegeY</div>
<div id="x151" class="t cell" style="left:1298.5px;top:1034.50px;font-size:13px;line-height:13px;color:#8c8c8c;font-weight:400;transform:scaleX(0.9170);transform-origin:0 0;-webkit-text-stroke:0.2px #8c8c8c;">No overrides</div>
<div id="x152" class="t cell" style="left:427.6px;top:1065.70px;font-size:13px;line-height:13px;color:#222;font-weight:400;transform:scaleX(0.9200);transform-origin:0 0;-webkit-text-stroke:0.2px #222;">23</div>
<div id="x153" class="t cell" style="left:498px;top:1065.70px;font-size:13px;line-height:13px;color:#222;font-weight:400;transform:scaleX(0.9200);transform-origin:0 0;-webkit-text-stroke:0.2px #222;">1-2 Miles</div>
<div id="x154" class="t cell" style="left:699px;top:1065.70px;font-size:13px;line-height:13px;color:#222;font-weight:400;transform:scaleX(0.9200);transform-origin:0 0;-webkit-text-stroke:0.2px #222;">Partial College</div>
<div id="x155" class="t cell" style="left:898.8px;top:1065.70px;font-size:13px;line-height:13px;color:#222;font-weight:400;transform:scaleX(0.9200);transform-origin:0 0;-webkit-text-stroke:0.2px #222;">N</div>
<div id="x156" class="t cell" style="left:1098px;top:1065.70px;font-size:13px;line-height:13px;color:#222;font-weight:400;transform:scaleX(0.9200);transform-origin:0 0;-webkit-text-stroke:0.2px #222;">1-2 MilesPartial CollegeN</div>
<div id="x157" class="t cell" style="left:1298.5px;top:1065.70px;font-size:13px;line-height:13px;color:#8c8c8c;font-weight:400;transform:scaleX(0.9170);transform-origin:0 0;-webkit-text-stroke:0.2px #8c8c8c;">No overrides</div>
<div class="b" style="left:392px;top:1086px;width:30px;height:1px;background:#dcdcdc"></div>
<div class="b" style="left:423px;top:1086px;width:971px;height:1px;background:#eeeeee"></div>
<div class="b" style="left:408px;top:1086.3px;width:776px;height:3.5px;background:#dedede"></div>
<div id="x158" class="t hdr" style="left:427.6px;top:347.00px;font-size:13px;line-height:13px;color:#222;font-weight:400;transform:scaleX(0.8992);transform-origin:0 0;-webkit-text-stroke:0.5px #222;">Cell #</div>
<div id="x159" class="t hdr" style="left:498.1px;top:347.00px;font-size:13px;line-height:13px;color:#222;font-weight:400;transform:scaleX(0.9263);transform-origin:0 0;-webkit-text-stroke:0.5px #222;">Commute Distance</div>
<div id="x160" class="t hdr" style="left:698.5px;top:347.00px;font-size:13px;line-height:13px;color:#222;font-weight:400;transform:scaleX(0.9243);transform-origin:0 0;-webkit-text-stroke:0.5px #222;">English Education</div>
<div id="x161" class="t hdr" style="left:898.3px;top:347.00px;font-size:13px;line-height:13px;color:#222;font-weight:400;transform:scaleX(0.9341);transform-origin:0 0;-webkit-text-stroke:0.5px #222;">Males</div>
<div id="x162" class="t hdr" style="left:1097.5px;top:347.00px;font-size:13px;line-height:13px;color:#222;font-weight:400;transform:scaleX(0.9092);transform-origin:0 0;-webkit-text-stroke:0.5px #222;">Code Value</div>
<div id="x163" class="t hdr" style="left:1298.0px;top:347.00px;font-size:13px;line-height:13px;color:#222;font-weight:400;transform:scaleX(0.9354);transform-origin:0 0;-webkit-text-stroke:0.5px #222;">Metadata</div>
<svg class="s" style="left:475px;top:349px" width="9" height="10" viewBox="0 0 9 10"><path d="M0.3 0.5H8.7V2.2L5.4 5.3V9.5H3.6V5.3L0.3 2.2Z" fill="#5a5a5a"/></svg>
<svg class="s" style="left:675px;top:349px" width="9" height="10" viewBox="0 0 9 10"><path d="M0.3 0.5H8.7V2.2L5.4 5.3V9.5H3.6V5.3L0.3 2.2Z" fill="#5a5a5a"/></svg>
<svg class="s" style="left:875px;top:349px" width="9" height="10" viewBox="0 0 9 10"><path d="M0.3 0.5H8.7V2.2L5.4 5.3V9.5H3.6V5.3L0.3 2.2Z" fill="#5a5a5a"/></svg>
<svg class="s" style="left:1075px;top:349px" width="9" height="10" viewBox="0 0 9 10"><path d="M0.3 0.5H8.7V2.2L5.4 5.3V9.5H3.6V5.3L0.3 2.2Z" fill="#5a5a5a"/></svg>
<svg class="s" style="left:1275px;top:349px" width="9" height="10" viewBox="0 0 9 10"><path d="M0.3 0.5H8.7V2.2L5.4 5.3V9.5H3.6V5.3L0.3 2.2Z" fill="#5a5a5a"/></svg>
<div class="b" style="left:494px;top:337px;width:3.3px;height:755px;background:#8fbbea"></div>
<svg class="s" style="left:402px;top:379px" width="10" height="12" viewBox="0 0 10 12"><path d="M2.5 1.5L7.5 6L2.5 10.5" fill="none" stroke="#444" stroke-width="1.3"/></svg>
<div class="b" style="left:1388px;top:385.5px;width:4px;height:326.5px;background:#e3e3e3"></div>
<div class="b" style="left:1428px;top:121px;width:274px;height:980px;background:#fff"></div>
<div id="x164" class="t srch" style="left:1438px;top:130.50px;font-size:15px;line-height:15px;color:#3d4f5a;font-weight:400;transform:scaleX(0.9531);transform-origin:0 0;-webkit-text-stroke:0.6px #3d4f5a;">Search</div>
<div id="x165" class="t brws" style="left:1501.5px;top:130.50px;font-size:15px;line-height:15px;color:#8a9399;font-weight:400;transform:scaleX(0.9634);transform-origin:0 0;">Browse</div>
<div class="b" style="left:1428px;top:151px;width:274px;height:3px;background:#e8e8e8"></div>
<div class="b" style="left:1436px;top:151px;width:50px;height:3px;background:#2f4149;border-radius:2px"></div>
<svg class="s" style="left:1677px;top:125px" width="20" height="20" viewBox="0 0 20 20"><path d="M10 16.5H1.5V1.5H11L14 4.5V8" fill="none" stroke="#888" stroke-width="1.2"/><path d="M4 5H10M4 8H10M4 11H8" stroke="#888" stroke-width="1"/><circle cx="13.5" cy="13.5" r="5.3" fill="#fff" stroke="#3f7fd0" stroke-width="1.4"/><path d="M13.5 10.8V16.2M10.8 13.5H16.2" stroke="#3f7fd0" stroke-width="1.4"/></svg>
<div id="x166" class="t core" style="left:1438px;top:163.50px;font-size:15px;line-height:15px;color:#111;font-weight:400;transform:scaleX(0.9356);transform-origin:0 0;-webkit-text-stroke:0.5px #111;">coreuser</div>
<svg class="s" style="left:1677px;top:160px" width="21" height="21" viewBox="0 0 21 21"><path d="M8.5 6V1.5H16L19.5 5V15.5H16" fill="#eee" stroke="#8a8a8a" stroke-width="1.2"/><path d="M11 5H16M11 8H17M11 11H17" stroke="#8a8a8a" stroke-width="1"/><path d="M1.5 19.5V9.5H6.5L8 11.5H13.5V19.5Z" fill="#fff" stroke="#3f8ed6" stroke-width="1.5"/></svg>
<div class="b" style="left:1428px;top:187px;width:274px;height:1px;background:#e2e2e2"></div>
<div id="x167" class="t sf" style="left:1438px;top:197.00px;font-size:13px;line-height:13px;color:#9a9a9a;font-weight:400;transform:scaleX(0.9231);transform-origin:0 0;">Search files</div>
<svg class="s" style="left:1588px;top:196px" width="12" height="9" viewBox="0 0 12 9"><path d="M1 1.5L6 6.5L11 1.5" fill="none" stroke="#555" stroke-width="1.6"/></svg>
<svg class="s" style="left:1613px;top:194px" width="17" height="16" viewBox="0 0 17 16"><circle cx="6.8" cy="6.8" r="5.6" fill="none" stroke="#3f7bc4" stroke-width="1.7"/><path d="M10.8 10.8L15.5 15.3" stroke="#3f7bc4" stroke-width="1.9"/></svg>
<svg class="s" style="left:1640px;top:194px" width="18" height="17" viewBox="0 0 18 17"><path d="M1 1H12L7.5 7V12L5.5 10V7Z" fill="none" stroke="#4a84c8" stroke-width="1.3" stroke-linejoin="round"/><rect x="9.5" y="8" width="7" height="8" fill="#fff" stroke="#8a8a8a" stroke-width="1.1"/><path d="M11 11H15M11 13.5H15" stroke="#8a8a8a" stroke-width="0.9"/></svg>
<svg class="s" style="left:1666px;top:196px" width="12" height="11" viewBox="0 0 12 11"><path d="M11 0.8V10.2L1.5 5.5Z" fill="#c2c2c2"/></svg>
<svg class="s" style="left:1687px;top:196px" width="12" height="11" viewBox="0 0 12 11"><path d="M1 0.8V10.2L10.5 5.5Z" fill="#111"/></svg>
<div class="b" style="left:1428px;top:216px;width:274px;height:1px;background:#e2e2e2"></div>
<div class="b" style="left:1691px;top:219px;width:9px;height:857px;background:#f7f7f7"></div>
<div class="b" style="left:1691px;top:219px;width:9px;height:225px;background:#ebebeb"></div>
<div id="x168" class="t folder" style="left:1434px;top:236.73px;font-size:14.5px;line-height:14.5px;color:#8d9499;font-weight:400;transform:scaleX(0.9579);transform-origin:0 0;-webkit-text-stroke:0.3px #8d9499;">coreuser (User Folder)</div>
<svg class="s" style="left:1671px;top:236px" width="13" height="9" viewBox="0 0 13 9"><path d="M1.2 1.8L6.5 6.8L11.8 1.8" fill="none" stroke="#7b848a" stroke-width="1.8"/></svg>
<div class="b" style="left:1428px;top:217px;width:263px;height:858px;overflow:hidden">
<svg class="s" style="left:8px;top:56.2px" width="16" height="17" viewBox="0 0 16 17"><g fill="#4679b7"><ellipse cx="7.8" cy="4.3" rx="3.2" ry="4.1"/><path d="M6.1 7.6L5.8 8.8C3.2 9.4 0.9 10.3 0.5 14H15.1C14.7 10.3 12.4 9.4 9.8 8.8L9.5 7.6Z"/></g><path d="M2.4 7.9L0.6 13.4L1.9 15.5H9.4V12.2L4.6 9.4Z" fill="#2a78be"/></svg>
<div id="x169" class="t li" style="left:34px;top:57.40px;font-size:13px;line-height:13px;color:#222;font-weight:400;transform:scaleX(0.9200);transform-origin:0 0;-webkit-text-stroke:0.2px #222;">012345678901234567890123456789...</div>
<svg class="s" style="left:8px;top:88.2px" width="16" height="15" viewBox="0 0 16 15"><g fill="#4679b7"><ellipse cx="7.8" cy="4.3" rx="3.2" ry="4.1"/><path d="M6.1 7.6L5.8 8.8C3.2 9.4 0.9 10.3 0.5 14H15.1C14.7 10.3 12.4 9.4 9.8 8.8L9.5 7.6Z"/></g></svg>
<div id="x170" class="t li" style="left:34px;top:89.40px;font-size:13px;line-height:13px;color:#222;font-weight:400;transform:scaleX(0.9200);transform-origin:0 0;-webkit-text-stroke:0.2px #222;">10714a</div>
<svg class="s" style="left:8px;top:120.2px" width="16" height="15" viewBox="0 0 16 15"><g fill="#4679b7"><ellipse cx="7.8" cy="4.3" rx="3.2" ry="4.1"/><path d="M6.1 7.6L5.8 8.8C3.2 9.4 0.9 10.3 0.5 14H15.1C14.7 10.3 12.4 9.4 9.8 8.8L9.5 7.6Z"/></g></svg>
<div id="x171" class="t li" style="left:34px;top:121.40px;font-size:13px;line-height:13px;color:#222;font-weight:400;transform:scaleX(0.9200);transform-origin:0 0;-webkit-text-stroke:0.2px #222;">10714b</div>
<svg class="s" style="left:8px;top:152.2px" width="16" height="15" viewBox="0 0 16 15"><g fill="#4679b7"><ellipse cx="7.8" cy="4.3" rx="3.2" ry="4.1"/><path d="M6.1 7.6L5.8 8.8C3.2 9.4 0.9 10.3 0.5 14H15.1C14.7 10.3 12.4 9.4 9.8 8.8L9.5 7.6Z"/></g></svg>
<div id="x172" class="t li" style="left:34px;top:153.40px;font-size:13px;line-height:13px;color:#222;font-weight:400;transform:scaleX(0.9200);transform-origin:0 0;-webkit-text-stroke:0.2px #222;">11120</div>
<svg class="s" style="left:8px;top:184.2px" width="16" height="15" viewBox="0 0 16 15"><g fill="#4679b7"><ellipse cx="7.8" cy="4.3" rx="3.2" ry="4.1"/><path d="M6.1 7.6L5.8 8.8C3.2 9.4 0.9 10.3 0.5 14H15.1C14.7 10.3 12.4 9.4 9.8 8.8L9.5 7.6Z"/></g></svg>
<div id="x173" class="t li" style="left:34px;top:185.40px;font-size:13px;line-height:13px;color:#222;font-weight:400;transform:scaleX(0.9200);transform-origin:0 0;-webkit-text-stroke:0.2px #222;">11162 Aggregation</div>
<svg class="s" style="left:8px;top:216.2px" width="16" height="15" viewBox="0 0 16 15"><g fill="#4679b7"><ellipse cx="7.8" cy="4.3" rx="3.2" ry="4.1"/><path d="M6.1 7.6L5.8 8.8C3.2 9.4 0.9 10.3 0.5 14H15.1C14.7 10.3 12.4 9.4 9.8 8.8L9.5 7.6Z"/></g></svg>
<div id="x174" class="t li" style="left:34px;top:217.40px;font-size:13px;line-height:13px;color:#222;font-weight:400;transform:scaleX(0.9200);transform-origin:0 0;-webkit-text-stroke:0.2px #222;">11163</div>
<svg class="s" style="left:7.5px;top:247.8px" width="17" height="16" viewBox="0 0 17 16"><rect x="6.3" y="0.6" width="9.6" height="11.4" rx="1.3" fill="#fff" stroke="#8f969c" stroke-width="1.1"/><path d="M8.5 3H14M8.5 4.2H12M8.5 6.5H14M8.5 7.7H12" stroke="#c0c4c8" stroke-width="1.1"/><rect x="0.5" y="9.3" width="12.6" height="5.5" rx="1.4" fill="#fff" stroke="#8f969c" stroke-width="1.2"/><path d="M2.2 11.6H6.5M2.2 12.8H5" stroke="#c0c4c8" stroke-width="1"/><path d="M8.6 13.2L10.9 10.6" stroke="#5b87c5" stroke-width="1.1"/></svg>
<div id="x175" class="t li" style="left:34px;top:249.40px;font-size:13px;line-height:13px;color:#222;font-weight:400;transform:scaleX(0.9200);transform-origin:0 0;-webkit-text-stroke:0.2px #222;">13493</div>
<svg class="s" style="left:8px;top:280.2px" width="16" height="15" viewBox="0 0 16 15"><g fill="#4679b7"><ellipse cx="7.8" cy="4.3" rx="3.2" ry="4.1"/><path d="M6.1 7.6L5.8 8.8C3.2 9.4 0.9 10.3 0.5 14H15.1C14.7 10.3 12.4 9.4 9.8 8.8L9.5 7.6Z"/></g></svg>
<div id="x176" class="t li" style="left:34px;top:281.40px;font-size:13px;line-height:13px;color:#222;font-weight:400;transform:scaleX(0.9200);transform-origin:0 0;-webkit-text-stroke:0.2px #222;">14038</div>
<svg class="s" style="left:8px;top:312.2px" width="16" height="15" viewBox="0 0 16 15"><g fill="#4679b7"><ellipse cx="7.8" cy="4.3" rx="3.2" ry="4.1"/><path d="M6.1 7.6L5.8 8.8C3.2 9.4 0.9 10.3 0.5 14H15.1C14.7 10.3 12.4 9.4 9.8 8.8L9.5 7.6Z"/></g></svg>
<div id="x177" class="t li" style="left:34px;top:313.40px;font-size:13px;line-height:13px;color:#222;font-weight:400;transform:scaleX(0.9200);transform-origin:0 0;-webkit-text-stroke:0.2px #222;">aaa</div>
<svg class="s" style="left:8px;top:344.2px" width="16" height="15" viewBox="0 0 16 15"><g fill="#4679b7"><ellipse cx="7.8" cy="4.3" rx="3.2" ry="4.1"/><path d="M6.1 7.6L5.8 8.8C3.2 9.4 0.9 10.3 0.5 14H15.1C14.7 10.3 12.4 9.4 9.8 8.8L9.5 7.6Z"/></g></svg>
<div id="x178" class="t li" style="left:34px;top:345.40px;font-size:13px;line-height:13px;color:#222;font-weight:400;transform:scaleX(0.9200);transform-origin:0 0;-webkit-text-stroke:0.2px #222;">aaaa</div>
<svg class="s" style="left:8px;top:376.2px" width="16" height="17" viewBox="0 0 16 17"><g fill="#4679b7"><ellipse cx="7.8" cy="4.3" rx="3.2" ry="4.1"/><path d="M6.1 7.6L5.8 8.8C3.2 9.4 0.9 10.3 0.5 14H15.1C14.7 10.3 12.4 9.4 9.8 8.8L9.5 7.6Z"/></g><path d="M2.4 7.9L0.6 13.4L1.9 15.5H9.4V12.2L4.6 9.4Z" fill="#2a78be"/></svg>
<div id="x179" class="t li" style="left:34px;top:377.40px;font-size:13px;line-height:13px;color:#222;font-weight:400;transform:scaleX(0.9200);transform-origin:0 0;-webkit-text-stroke:0.2px #222;">Address Line1</div>
<svg class="s" style="left:8px;top:408.2px" width="16" height="17" viewBox="0 0 16 17"><g fill="#4679b7"><ellipse cx="7.8" cy="4.3" rx="3.2" ry="4.1"/><path d="M6.1 7.6L5.8 8.8C3.2 9.4 0.9 10.3 0.5 14H15.1C14.7 10.3 12.4 9.4 9.8 8.8L9.5 7.6Z"/></g><path d="M2.4 7.9L0.6 13.4L1.9 15.5H9.4V12.2L4.6 9.4Z" fill="#2a78be"/></svg>
<div id="x180" class="t li" style="left:34px;top:409.40px;font-size:13px;line-height:13px;color:#222;font-weight:400;transform:scaleX(0.9200);transform-origin:0 0;-webkit-text-stroke:0.2px #222;">Address Line2</div>
<svg class="s" style="left:8px;top:440.2px" width="16" height="15" viewBox="0 0 16 15"><g fill="#4679b7"><ellipse cx="7.8" cy="4.3" rx="3.2" ry="4.1"/><path d="M6.1 7.6L5.8 8.8C3.2 9.4 0.9 10.3 0.5 14H15.1C14.7 10.3 12.4 9.4 9.8 8.8L9.5 7.6Z"/></g></svg>
<div id="x181" class="t li" style="left:34px;top:441.40px;font-size:13px;line-height:13px;color:#222;font-weight:400;transform:scaleX(0.9200);transform-origin:0 0;-webkit-text-stroke:0.2px #222;">Agg 1</div>
<svg class="s" style="left:8px;top:472.2px" width="16" height="15" viewBox="0 0 16 15"><g fill="#4679b7"><ellipse cx="7.8" cy="4.3" rx="3.2" ry="4.1"/><path d="M6.1 7.6L5.8 8.8C3.2 9.4 0.9 10.3 0.5 14H15.1C14.7 10.3 12.4 9.4 9.8 8.8L9.5 7.6Z"/></g></svg>
<div id="x182" class="t li" style="left:34px;top:473.40px;font-size:13px;line-height:13px;color:#222;font-weight:400;transform:scaleX(0.9200);transform-origin:0 0;-webkit-text-stroke:0.2px #222;">Agg 2</div>
<svg class="s" style="left:6px;top:502.5px" width="20" height="19" viewBox="1434 719.5 20 19"><g fill="none" stroke="#8a8a8a" stroke-width="1.3"><circle cx="1446.5" cy="725.5" r="5"/><path d="M1438.8 726A5.2 5.2 0 1 0 1445.9 733.2"/></g><text x="1446.5" y="728.3" font-size="8" font-weight="700" text-anchor="middle" fill="#8a8a8a" font-family="Liberation Sans">$</text><text x="1440.3" y="734.3" font-size="7.5" font-weight="700" text-anchor="middle" fill="#8a8a8a" font-family="Liberation Sans">$</text></svg>
<div id="x183" class="t li" style="left:34px;top:505.40px;font-size:13px;line-height:13px;color:#222;font-weight:400;transform:scaleX(0.9200);transform-origin:0 0;-webkit-text-stroke:0.2px #222;">All Zeros</div>
<svg class="s" style="left:8px;top:536.2px" width="16" height="15" viewBox="0 0 16 15"><g fill="#4679b7"><ellipse cx="7.8" cy="4.3" rx="3.2" ry="4.1"/><path d="M6.1 7.6L5.8 8.8C3.2 9.4 0.9 10.3 0.5 14H15.1C14.7 10.3 12.4 9.4 9.8 8.8L9.5 7.6Z"/></g></svg>
<div id="x184" class="t li" style="left:34px;top:537.40px;font-size:13px;line-height:13px;color:#222;font-weight:400;transform:scaleX(0.9200);transform-origin:0 0;-webkit-text-stroke:0.2px #222;">Alt Email Address</div>
<svg class="s" style="left:7.5px;top:567.8px" width="17" height="16" viewBox="0 0 17 16"><rect x="6.3" y="0.6" width="9.6" height="11.4" rx="1.3" fill="#fff" stroke="#8f969c" stroke-width="1.1"/><path d="M8.5 3H14M8.5 4.2H12M8.5 6.5H14M8.5 7.7H12" stroke="#c0c4c8" stroke-width="1.1"/><rect x="0.5" y="9.3" width="12.6" height="5.5" rx="1.4" fill="#fff" stroke="#8f969c" stroke-width="1.2"/><path d="M2.2 11.6H6.5M2.2 12.8H5" stroke="#c0c4c8" stroke-width="1"/><path d="M8.6 13.2L10.9 10.6" stroke="#5b87c5" stroke-width="1.1"/></svg>
<div id="x185" class="t li" style="left:34px;top:569.40px;font-size:13px;line-height:13px;color:#222;font-weight:400;transform:scaleX(0.9200);transform-origin:0 0;-webkit-text-stroke:0.2px #222;">Another Customer First Name</div>
<svg class="s" style="left:8px;top:600.2px" width="16" height="15" viewBox="0 0 16 15"><g fill="#4679b7"><ellipse cx="7.8" cy="4.3" rx="3.2" ry="4.1"/><path d="M6.1 7.6L5.8 8.8C3.2 9.4 0.9 10.3 0.5 14H15.1C14.7 10.3 12.4 9.4 9.8 8.8L9.5 7.6Z"/></g></svg>
<div id="x186" class="t li" style="left:34px;top:601.40px;font-size:13px;line-height:13px;color:#222;font-weight:400;transform:scaleX(0.9200);transform-origin:0 0;-webkit-text-stroke:0.2px #222;">Att1</div>
<svg class="s" style="left:7.5px;top:631.8px" width="17" height="16" viewBox="0 0 17 16"><rect x="6.3" y="0.6" width="9.6" height="11.4" rx="1.3" fill="#fff" stroke="#8f969c" stroke-width="1.1"/><path d="M8.5 3H14M8.5 4.2H12M8.5 6.5H14M8.5 7.7H12" stroke="#c0c4c8" stroke-width="1.1"/><rect x="0.5" y="9.3" width="12.6" height="5.5" rx="1.4" fill="#fff" stroke="#8f969c" stroke-width="1.2"/><path d="M2.2 11.6H6.5M2.2 12.8H5" stroke="#c0c4c8" stroke-width="1"/><path d="M8.6 13.2L10.9 10.6" stroke="#5b87c5" stroke-width="1.1"/></svg>
<div id="x187" class="t li" style="left:34px;top:633.40px;font-size:13px;line-height:13px;color:#222;font-weight:400;transform:scaleX(0.9200);transform-origin:0 0;-webkit-text-stroke:0.2px #222;">Aux Agg</div>
<svg class="s" style="left:7.5px;top:663.8px" width="17" height="16" viewBox="0 0 17 16"><rect x="6.3" y="0.6" width="9.6" height="11.4" rx="1.3" fill="#fff" stroke="#8f969c" stroke-width="1.1"/><path d="M8.5 3H14M8.5 4.2H12M8.5 6.5H14M8.5 7.7H12" stroke="#c0c4c8" stroke-width="1.1"/><rect x="0.5" y="9.3" width="12.6" height="5.5" rx="1.4" fill="#fff" stroke="#8f969c" stroke-width="1.2"/><path d="M2.2 11.6H6.5M2.2 12.8H5" stroke="#c0c4c8" stroke-width="1"/><path d="M8.6 13.2L10.9 10.6" stroke="#5b87c5" stroke-width="1.1"/></svg>
<div id="x188" class="t li" style="left:34px;top:665.40px;font-size:13px;line-height:13px;color:#222;font-weight:400;transform:scaleX(0.9200);transform-origin:0 0;-webkit-text-stroke:0.2px #222;">Aux Cust Key</div>
<svg class="s" style="left:8px;top:696.2px" width="16" height="15" viewBox="0 0 16 15"><g fill="#4679b7"><ellipse cx="7.8" cy="4.3" rx="3.2" ry="4.1"/><path d="M6.1 7.6L5.8 8.8C3.2 9.4 0.9 10.3 0.5 14H15.1C14.7 10.3 12.4 9.4 9.8 8.8L9.5 7.6Z"/></g></svg>
<div id="x189" class="t li" style="left:34px;top:697.40px;font-size:13px;line-height:13px;color:#222;font-weight:400;transform:scaleX(0.9200);transform-origin:0 0;-webkit-text-stroke:0.2px #222;">Average Income By First Name</div>
<svg class="s" style="left:8px;top:728.2px" width="16" height="15" viewBox="0 0 16 15"><g fill="#4679b7"><ellipse cx="7.8" cy="4.3" rx="3.2" ry="4.1"/><path d="M6.1 7.6L5.8 8.8C3.2 9.4 0.9 10.3 0.5 14H15.1C14.7 10.3 12.4 9.4 9.8 8.8L9.5 7.6Z"/></g></svg>
<div id="x190" class="t li" style="left:34px;top:729.40px;font-size:13px;line-height:13px;color:#222;font-weight:400;transform:scaleX(0.9200);transform-origin:0 0;-webkit-text-stroke:0.2px #222;">Basic Flag</div>
<svg class="s" style="left:8px;top:760.2px" width="16" height="15" viewBox="0 0 16 15"><g fill="#4679b7"><ellipse cx="7.8" cy="4.3" rx="3.2" ry="4.1"/><path d="M6.1 7.6L5.8 8.8C3.2 9.4 0.9 10.3 0.5 14H15.1C14.7 10.3 12.4 9.4 9.8 8.8L9.5 7.6Z"/></g></svg>
<div id="x191" class="t li" style="left:34px;top:761.40px;font-size:13px;line-height:13px;color:#222;font-weight:400;transform:scaleX(0.9200);transform-origin:0 0;-webkit-text-stroke:0.2px #222;">bbb</div>
<svg class="s" style="left:8px;top:792.2px" width="16" height="15" viewBox="0 0 16 15"><g fill="#4679b7"><ellipse cx="7.8" cy="4.3" rx="3.2" ry="4.1"/><path d="M6.1 7.6L5.8 8.8C3.2 9.4 0.9 10.3 0.5 14H15.1C14.7 10.3 12.4 9.4 9.8 8.8L9.5 7.6Z"/></g></svg>
<div id="x192" class="t li" style="left:34px;top:793.40px;font-size:13px;line-height:13px;color:#222;font-weight:400;transform:scaleX(0.9200);transform-origin:0 0;-webkit-text-stroke:0.2px #222;">Big Big Int</div>
<svg class="s" style="left:8px;top:824.2px" width="16" height="15" viewBox="0 0 16 15"><g fill="#4679b7"><ellipse cx="7.8" cy="4.3" rx="3.2" ry="4.1"/><path d="M6.1 7.6L5.8 8.8C3.2 9.4 0.9 10.3 0.5 14H15.1C14.7 10.3 12.4 9.4 9.8 8.8L9.5 7.6Z"/></g></svg>
<div id="x193" class="t li" style="left:34px;top:825.40px;font-size:13px;line-height:13px;color:#222;font-weight:400;transform:scaleX(0.9200);transform-origin:0 0;-webkit-text-stroke:0.2px #222;">Big Dec</div>
<svg class="s" style="left:8px;top:856.2px" width="16" height="15" viewBox="0 0 16 15"><g fill="#4679b7"><ellipse cx="7.8" cy="4.3" rx="3.2" ry="4.1"/><path d="M6.1 7.6L5.8 8.8C3.2 9.4 0.9 10.3 0.5 14H15.1C14.7 10.3 12.4 9.4 9.8 8.8L9.5 7.6Z"/></g></svg>
</div>
<div class="b" style="left:1654px;top:1079px;width:20px;height:20px;background:#d5e4f5;border-radius:2px"></div>
<svg class="s" style="left:1654px;top:1079px" width="20" height="20" viewBox="0 0 20 20"><g fill="#c8e6f0" stroke="#888" stroke-width="0.9"><rect x="1.5" y="3.5" width="3" height="3"/><rect x="1.5" y="9.5" width="3" height="3"/><rect x="1.5" y="14.5" width="3" height="3"/></g><path d="M6 5H17M6 11H17M6 16H17" stroke="#a9a9a9" stroke-width="1"/></svg>
<svg class="s" style="left:1681px;top:1080px" width="17" height="17" viewBox="0 0 17 17"><rect x="1" y="1" width="14.5" height="14.5" fill="#acd8e6" stroke="#888" stroke-width="1.2"/><path d="M1.5 8C5 5 9 6 15 9V15H1.5Z" fill="#5cb070"/><path d="M1.5 12C6 11 10 11 15 11V15H1.5Z" fill="#2e8a3a"/></svg>

</body></html>
